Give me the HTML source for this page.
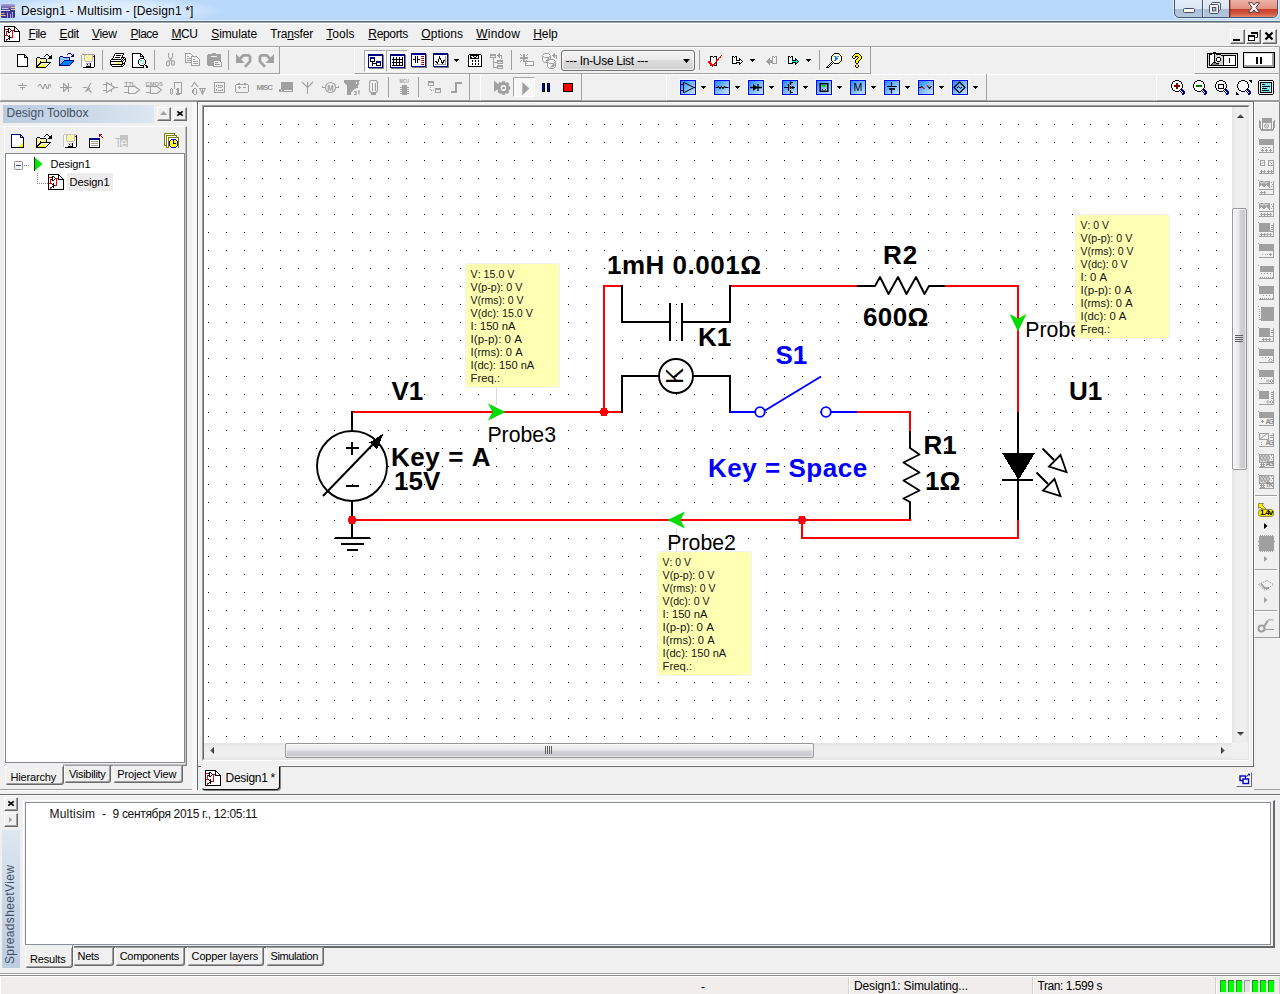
<!DOCTYPE html>
<html lang="en"><head><meta charset="utf-8">
<title>Design1 - Multisim - [Design1 *]</title>
<style>
html,body{margin:0;padding:0;}
body{width:1280px;height:994px;overflow:hidden;background:#f0f0f0;font-family:"Liberation Sans",sans-serif;font-size:12px;color:#000;}
#app{position:relative;width:1280px;height:994px;overflow:hidden;background:#f0f0f0;}
#app div,#app span.t,#app svg.i{position:absolute;box-sizing:border-box;}
span.t{white-space:pre;display:block;}
svg.i{overflow:visible;display:block;}
u{text-decoration:underline;text-underline-offset:1px;}

</style></head>
<body>
<div id="app">
<!-- p_chrome -->
<div class="titlebar" style="left:0px;top:0px;width:1280px;height:20px;background:#b9d9fb;"></div>
<div style="left:0px;top:0px;width:260px;height:20px;background:radial-gradient(ellipse 125px 15px at 100px 11px,rgba(255,255,255,.62) 0,rgba(255,255,255,.5) 55%,rgba(255,255,255,0) 100%);"></div>
<div style="left:0px;top:20px;width:1280px;height:1px;background:#dff0fd;"></div>
<div style="left:0px;top:21px;width:1280px;height:1px;background:#5c6b7c;"></div>
<div style="left:0px;top:22px;width:1280px;height:1px;background:#a3a5a8;"></div>
<div style="left:0px;top:23px;width:1280px;height:1px;background:#ffffff;"></div>
<svg class="i" style="left:1px;top:4px" width="14" height="14" viewBox="0 0 14 14" ><defs><linearGradient id="appg" x1="0" y1="0" x2="0" y2="1"><stop offset="0" stop-color="#a9a3d4"/><stop offset=".22" stop-color="#7a73b6"/><stop offset=".45" stop-color="#3a338c"/><stop offset="1" stop-color="#3b3590"/></linearGradient></defs><rect x="0" y="0" width="14" height="14" rx="1.500" fill="url(#appg)"/><path d="M1 4.500H7.500" stroke="#c9c5e6" stroke-width="1"/><path d="M0 6.500H8.500" stroke="#dad6f2" stroke-width="1"/><path d="M10 3.500H14M10 5.500H14" stroke="#efcf82" stroke-width="1"/><path d="M0 9.500H3.500" stroke="#d6b670" stroke-width="1"/><path d="M0 11.500H4.500" stroke="#f0c862" stroke-width="1"/><path d="M6.500 8.500V14M9.500 9.500V14M11.500 8.500V14" stroke="#a9a2d6" stroke-width="1"/><rect x="11" y="8" width="1" height="1" fill="#e8e4fa"/><rect x="8" y="6" width="1" height="1" fill="#f2f0ff"/></svg>
<span class="t" style="left:21px;top:5px;font-size:12px;line-height:12px;letter-spacing:0.139px;">Design1 - Multisim - [Design1 *]</span>
<div class="winctl" style="left:1174px;top:-3px;width:104px;height:21px;border:1px solid #46556e;border-radius:0 0 5px 5px;background:linear-gradient(180deg,#e4edf8 0,#dbe6f3 10.5px,#aabfd9 11.5px,#b6c8df 100%);box-shadow:0 0 0 1px rgba(255,255,255,.55);overflow:hidden;"><div style="left:27px;top:0px;width:1px;height:20px;background:#46556e;"></div><div style="left:28px;top:0px;width:1px;height:20px;background:rgba(255,255,255,.5);"></div><div style="left:54px;top:0px;width:49px;height:20px;background:linear-gradient(180deg,#f0b9ad 0,#e39383 10.5px,#c8402c 11.5px,#d25a42 16px,#e6a088 100%);border-left:1px solid #6e2c22;box-shadow:inset 0 0 0 1px rgba(120,30,20,.35);"></div></div>
<svg class="i" style="left:1183px;top:8px" width="12" height="5" viewBox="0 0 12 5" ><rect x="0.500" y="0.500" width="11" height="4" rx="1" fill="#f6f6f6" stroke="#4a5064"/></svg>
<svg class="i" style="left:1209px;top:2px" width="13" height="12" viewBox="0 0 13 12" ><rect x="2.500" y="0.500" width="9" height="8" rx="1.200" fill="#f2f4f8" stroke="#4a5064" stroke-width="1"/><rect x="0.500" y="2.500" width="9" height="9" rx="1.200" fill="#f2f4f8" stroke="#4a5064" stroke-width="1"/><rect x="3.500" y="5.500" width="3.300" height="3.300" fill="#b8c8de" stroke="#4a5064" stroke-width="1"/></svg>
<svg class="i" style="left:1248px;top:2px" width="12" height="11" viewBox="0 0 12 11" ><path d="M0.500 0.700L4.300 0.700L6 3L7.700 0.700L11.500 0.700L8 5.500L11.500 10.300L7.700 10.300L6 8L4.300 10.300L0.500 10.300L4 5.500Z" fill="#fbfbfb" stroke="#5c3a44" stroke-width="1"/></svg>
<div class="menubar" style="left:0px;top:24px;width:1280px;height:22px;background:#f0f0f0;border-left:1px solid #fff;"></div>
<div style="left:0px;top:46px;width:1280px;height:1px;background:#a0a0a0;"></div>
<div style="left:0px;top:47px;width:1280px;height:1px;background:#fff;"></div>
<svg class="i" style="left:4px;top:26px" width="16" height="16" viewBox="0 0 16 16" shape-rendering="crispEdges"><path d="M0 0H11L16 5V16H0Z" fill="#fff"/><path fill="#000" d="M0 0h11v1h-11zM0 1h1v1h-1zM10 1h2v1h-2zM0 2h1v1h-1zM4 2h2v1h-2zM10 2h1v1h-1zM12 2h1v1h-1zM0 3h1v1h-1zM3 3h2v1h-2zM6 3h1v1h-1zM10 3h1v1h-1zM13 3h1v1h-1zM0 4h1v1h-1zM4 4h1v1h-1zM7 4h1v1h-1zM10 4h1v1h-1zM14 4h1v1h-1zM0 5h1v1h-1zM3 5h2v1h-2zM6 5h1v1h-1zM10 5h6v1h-6zM0 6h1v1h-1zM4 6h2v1h-2zM15 6h1v1h-1zM0 7h1v1h-1zM15 7h1v1h-1zM0 8h1v1h-1zM15 8h1v1h-1zM0 9h1v1h-1zM3 9h1v1h-1zM5 9h1v1h-1zM15 9h1v1h-1zM0 10h1v1h-1zM4 10h2v1h-2zM15 10h1v1h-1zM0 11h1v1h-1zM5 11h2v1h-2zM15 11h1v1h-1zM0 12h1v1h-1zM4 12h2v1h-2zM15 12h1v1h-1zM0 13h1v1h-1zM3 13h1v1h-1zM5 13h1v1h-1zM15 13h1v1h-1zM0 14h1v1h-1zM15 14h1v1h-1zM0 15h16v1h-16z"/><path fill="#ff0000" d="M1 3h2v1h-2zM8 4h2v1h-2zM2 5h1v1h-1zM8 5h1v1h-1zM2 6h1v1h-1zM8 6h1v1h-1zM2 7h1v1h-1zM8 7h1v1h-1zM2 8h1v1h-1zM8 8h1v1h-1zM1 9h2v1h-2zM8 9h1v1h-1zM8 10h1v1h-1zM7 11h2v1h-2zM2 13h1v1h-1zM2 14h1v1h-1z"/></svg>
<span class="t" style="left:28.5px;top:28px;font-size:12px;line-height:12px;letter-spacing:-0.465px;"><u>F</u>ile</span>
<span class="t" style="left:59.5px;top:28px;font-size:12px;line-height:12px;letter-spacing:-0.351px;"><u>E</u>dit</span>
<span class="t" style="left:92px;top:28px;font-size:12px;line-height:12px;letter-spacing:-0.328px;"><u>V</u>iew</span>
<span class="t" style="left:130.5px;top:28px;font-size:12px;line-height:12px;letter-spacing:-0.506px;"><u>P</u>lace</span>
<span class="t" style="left:171.5px;top:28px;font-size:12px;line-height:12px;letter-spacing:-0.448px;"><u>M</u>CU</span>
<span class="t" style="left:211.3px;top:28px;font-size:12px;line-height:12px;letter-spacing:-0.125px;"><u>S</u>imulate</span>
<span class="t" style="left:270.3px;top:28px;font-size:12px;line-height:12px;letter-spacing:-0.196px;">Tra<u>n</u>sfer</span>
<span class="t" style="left:326.3px;top:28px;font-size:12px;line-height:12px;letter-spacing:0.037px;"><u>T</u>ools</span>
<span class="t" style="left:368.3px;top:28px;font-size:12px;line-height:12px;letter-spacing:-0.333px;"><u>R</u>eports</span>
<span class="t" style="left:421.3px;top:28px;font-size:12px;line-height:12px;letter-spacing:0.046px;"><u>O</u>ptions</span>
<span class="t" style="left:476.3px;top:28px;font-size:12px;line-height:12px;letter-spacing:0.169px;"><u>W</u>indow</span>
<span class="t" style="left:533.3px;top:28px;font-size:12px;line-height:12px;letter-spacing:-0.122px;"><u>H</u>elp</span>
<div class="mdibtn" style="left:1230px;top:29px;width:15px;height:15px;background:#f0f0f0;border:1px solid;border-color:#fff #696969 #696969 #fff;box-shadow:inset -1px -1px 0 #a0a0a0;"></div>
<div class="mdibtn" style="left:1246px;top:29px;width:15px;height:15px;background:#f0f0f0;border:1px solid;border-color:#fff #696969 #696969 #fff;box-shadow:inset -1px -1px 0 #a0a0a0;"></div>
<div class="mdibtn" style="left:1262px;top:29px;width:15px;height:15px;background:#f0f0f0;border:1px solid;border-color:#fff #696969 #696969 #fff;box-shadow:inset -1px -1px 0 #a0a0a0;"></div>
<svg class="i" style="left:1230px;top:29px" width="15" height="15" viewBox="0 0 15 15" ><rect x="3" y="10" width="7" height="2" fill="#000"/></svg>
<svg class="i" style="left:1246px;top:29px" width="15" height="15" viewBox="0 0 15 15" ><path d="M5.5 3.5h6v5h-2" fill="none" stroke="#000"/><rect x="5" y="3" width="7" height="2" fill="#000"/><rect x="2.500" y="6.500" width="6" height="5" fill="#fff" stroke="#000"/><rect x="2" y="6" width="7" height="2" fill="#000"/></svg>
<svg class="i" style="left:1262px;top:29px" width="15" height="15" viewBox="0 0 15 15" ><path d="M3.5 3.5L10.500 10.500M10.500 3.5L3.5 10.500" stroke="#000" stroke-width="2.200"/></svg>
<!-- p_toolbars -->
<div class="tbgroup" style="left:0px;top:47px;width:280px;height:27px;border-left:1px solid #fff;border-bottom:1px solid #a0a0a0;border-right:1px solid #a0a0a0;"></div>
<svg class="i" style="left:17px;top:54px" width="11" height="13" viewBox="0 0 11 13" shape-rendering="crispEdges"><path fill="#000000" d="M0 0h8v1h-8zM0 1h1v1h-1zM7 1h2v1h-2zM0 2h1v1h-1zM7 2h1v1h-1zM9 2h1v1h-1zM0 3h1v1h-1zM7 3h4v1h-4zM0 4h1v1h-1zM10 4h1v1h-1zM0 5h1v1h-1zM10 5h1v1h-1zM0 6h1v1h-1zM10 6h1v1h-1zM0 7h1v1h-1zM10 7h1v1h-1zM0 8h1v1h-1zM10 8h1v1h-1zM0 9h1v1h-1zM10 9h1v1h-1zM0 10h1v1h-1zM10 10h1v1h-1zM0 11h1v1h-1zM10 11h1v1h-1zM0 12h11v1h-11z"/><path fill="#ffffff" d="M1 1h6v1h-6zM1 2h6v1h-6zM8 2h1v1h-1zM1 3h6v1h-6zM1 4h9v1h-9zM1 5h9v1h-9zM1 6h9v1h-9zM1 7h9v1h-9zM1 8h9v1h-9zM1 9h9v1h-9zM1 10h9v1h-9zM1 11h9v1h-9z"/></svg>
<svg class="i" style="left:36px;top:54px" width="16" height="14" viewBox="0 0 16 14" shape-rendering="crispEdges"><path fill="#000000" d="M10 0h2v1h-2zM9 1h1v1h-1zM12 1h1v1h-1zM15 1h1v1h-1zM8 2h1v1h-1zM13 2h3v1h-3zM1 3h3v1h-3zM13 3h3v1h-3zM0 4h1v1h-1zM4 4h6v1h-6zM12 4h4v1h-4zM0 5h1v1h-1zM10 5h1v1h-1zM0 6h1v1h-1zM10 6h1v1h-1zM0 7h1v1h-1zM10 7h1v1h-1zM0 8h1v1h-1zM5 8h10v1h-10zM0 9h1v1h-1zM4 9h1v1h-1zM13 9h1v1h-1zM0 10h1v1h-1zM3 10h1v1h-1zM12 10h1v1h-1zM0 11h1v1h-1zM2 11h1v1h-1zM11 11h1v1h-1zM0 12h2v1h-2zM10 12h1v1h-1zM0 13h10v1h-10z"/><path fill="#ffffff" d="M1 4h3v1h-3zM2 5h1v1h-1zM4 5h6v1h-6zM1 6h1v1h-1zM3 6h1v1h-1zM5 6h1v1h-1zM7 6h1v1h-1zM9 6h1v1h-1zM2 7h1v1h-1zM6 7h1v1h-1zM8 7h1v1h-1zM1 8h1v1h-1zM3 8h1v1h-1zM2 9h1v1h-1zM6 9h7v1h-7zM1 10h1v1h-1zM5 10h1v1h-1zM7 10h1v1h-1zM9 10h1v1h-1zM11 10h1v1h-1zM4 11h1v1h-1zM6 11h1v1h-1zM8 11h1v1h-1zM10 11h1v1h-1z"/><path fill="#ffff00" d="M1 5h1v1h-1zM3 5h1v1h-1zM2 6h1v1h-1zM4 6h1v1h-1zM6 6h1v1h-1zM8 6h1v1h-1zM1 7h1v1h-1zM3 7h1v1h-1zM5 7h1v1h-1zM7 7h1v1h-1zM9 7h1v1h-1zM2 8h1v1h-1zM1 9h1v1h-1zM5 9h1v1h-1zM4 10h1v1h-1zM6 10h1v1h-1zM8 10h1v1h-1zM10 10h1v1h-1zM3 11h1v1h-1zM5 11h1v1h-1zM7 11h1v1h-1zM9 11h1v1h-1zM2 12h8v1h-8z"/><path fill="#000080" d="M4 7h1v1h-1zM4 8h1v1h-1zM3 9h1v1h-1zM2 10h1v1h-1zM1 11h1v1h-1z"/></svg>
<svg class="i" style="left:59px;top:53px" width="15" height="13" viewBox="0 0 15 13" shape-rendering="crispEdges"><path fill="#000080" d="M9 0h3v1h-3zM8 1h1v1h-1zM12 1h1v1h-1zM14 1h1v1h-1zM13 2h2v1h-2zM1 3h3v1h-3zM12 3h3v1h-3zM0 4h1v1h-1zM4 4h7v1h-7zM0 5h1v1h-1zM10 5h1v1h-1zM0 6h1v1h-1zM10 6h1v1h-1zM0 7h1v1h-1zM5 7h10v1h-10zM0 8h1v1h-1zM4 8h1v1h-1zM14 8h1v1h-1zM0 9h1v1h-1zM3 9h1v1h-1zM13 9h1v1h-1zM0 10h1v1h-1zM2 10h1v1h-1zM12 10h1v1h-1zM0 11h2v1h-2zM11 11h1v1h-1zM0 12h11v1h-11z"/><path fill="#8cc8ff" d="M1 4h3v1h-3zM1 5h9v1h-9zM1 6h9v1h-9zM1 7h4v1h-4zM1 8h3v1h-3zM1 9h2v1h-2zM1 10h1v1h-1z"/><path fill="#0080ff" d="M5 8h9v1h-9zM4 9h9v1h-9zM3 10h9v1h-9zM2 11h9v1h-9z"/></svg>
<svg class="i" style="left:81px;top:54px" width="14" height="14" viewBox="0 0 14 14" shape-rendering="crispEdges"><path fill="#a0a0a0" d="M1 0h12v1h-12zM0 1h1v1h-1zM0 2h1v1h-1zM0 3h1v1h-1zM0 4h1v1h-1zM0 5h1v1h-1zM0 6h1v1h-1zM0 7h1v1h-1zM0 8h1v1h-1zM0 9h1v1h-1zM5 9h4v1h-4zM0 10h1v1h-1zM0 11h1v1h-1zM0 12h1v1h-1z"/><path fill="#fdfdfd" d="M1 1h2v1h-2zM12 1h1v1h-1zM1 2h2v1h-2zM1 3h2v1h-2zM12 3h1v1h-1zM1 4h2v1h-2zM12 4h1v1h-1zM1 5h2v1h-2zM12 5h1v1h-1zM1 6h2v1h-2zM12 6h1v1h-1zM1 7h3v1h-3zM11 7h2v1h-2zM1 8h12v1h-12zM1 9h4v1h-4zM10 9h3v1h-3zM1 10h4v1h-4zM10 10h3v1h-3zM1 11h4v1h-4zM10 11h3v1h-3zM1 12h4v1h-4zM10 12h3v1h-3z"/><path fill="#b4b4c8" d="M3 1h1v1h-1zM11 1h1v1h-1zM3 2h1v1h-1zM11 2h1v1h-1zM3 3h1v1h-1zM11 3h1v1h-1zM3 4h1v1h-1zM11 4h1v1h-1zM3 5h1v1h-1zM11 5h1v1h-1zM3 6h1v1h-1zM11 6h1v1h-1zM4 7h7v1h-7z"/><path fill="#ffff00" d="M4 1h1v1h-1zM7 1h1v1h-1zM10 1h1v1h-1zM5 2h1v1h-1zM8 2h1v1h-1zM6 3h1v1h-1zM9 3h1v1h-1zM4 4h1v1h-1zM7 4h1v1h-1zM10 4h1v1h-1zM5 5h1v1h-1zM8 5h1v1h-1zM4 6h1v1h-1zM6 6h1v1h-1zM9 6h1v1h-1z"/><path fill="#ffffff" d="M5 1h2v1h-2zM8 1h2v1h-2zM4 2h1v1h-1zM6 2h2v1h-2zM9 2h2v1h-2zM4 3h2v1h-2zM7 3h2v1h-2zM10 3h1v1h-1zM5 4h2v1h-2zM8 4h2v1h-2zM4 5h1v1h-1zM6 5h2v1h-2zM9 5h2v1h-2zM5 6h1v1h-1zM7 6h2v1h-2zM10 6h1v1h-1zM7 10h1v1h-1z"/><path fill="#000000" d="M13 1h1v1h-1zM13 2h1v1h-1zM13 3h1v1h-1zM13 4h1v1h-1zM13 5h1v1h-1zM13 6h1v1h-1zM13 7h1v1h-1zM13 8h1v1h-1zM9 9h1v1h-1zM13 9h1v1h-1zM6 10h1v1h-1zM9 10h1v1h-1zM13 10h1v1h-1zM9 11h1v1h-1zM13 11h1v1h-1zM5 12h5v1h-5zM13 12h1v1h-1zM2 13h11v1h-11z"/><path fill="#ff0000" d="M12 2h1v1h-1z"/><path fill="#d4d4d4" d="M5 10h1v1h-1zM8 10h1v1h-1zM5 11h4v1h-4z"/></svg>
<svg class="i" style="left:110px;top:53px" width="16" height="14" viewBox="0 0 16 14" shape-rendering="crispEdges"><path fill="#000000" d="M5 0h9v1h-9zM4 1h1v1h-1zM13 1h1v1h-1zM4 2h1v1h-1zM6 2h5v1h-5zM12 2h1v1h-1zM3 3h1v1h-1zM12 3h1v1h-1zM3 4h1v1h-1zM5 4h5v1h-5zM11 4h4v1h-4zM2 5h1v1h-1zM11 5h1v1h-1zM13 5h1v1h-1zM15 5h1v1h-1zM1 6h10v1h-10zM12 6h1v1h-1zM14 6h2v1h-2zM0 7h1v1h-1zM11 7h1v1h-1zM13 7h1v1h-1zM15 7h1v1h-1zM0 8h13v1h-13zM15 8h1v1h-1zM0 9h1v1h-1zM12 9h1v1h-1zM14 9h1v1h-1zM0 10h1v1h-1zM12 10h3v1h-3zM0 11h13v1h-13zM14 11h1v1h-1zM1 12h1v1h-1zM11 12h1v1h-1zM13 12h1v1h-1zM2 13h11v1h-11z"/><path fill="#ffffff" d="M5 1h8v1h-8zM5 2h1v1h-1zM11 2h1v1h-1zM4 3h8v1h-8zM4 4h1v1h-1zM10 4h1v1h-1zM3 5h8v1h-8zM12 5h1v1h-1zM14 5h1v1h-1zM11 6h1v1h-1zM13 6h1v1h-1zM1 7h10v1h-10zM12 7h1v1h-1zM14 7h1v1h-1zM13 8h2v1h-2zM1 9h6v1h-6zM10 9h2v1h-2zM13 9h1v1h-1zM1 10h6v1h-6zM10 10h2v1h-2zM13 11h1v1h-1zM2 12h9v1h-9zM12 12h1v1h-1z"/><path fill="#ffff00" d="M7 9h3v1h-3zM7 10h3v1h-3z"/></svg>
<svg class="i" style="left:132px;top:53px" width="16" height="15" viewBox="0 0 16 15" shape-rendering="crispEdges"><path fill="#000000" d="M0 0h9v1h-9zM0 1h1v1h-1zM8 1h2v1h-2zM0 2h1v1h-1zM8 2h1v1h-1zM10 2h1v1h-1zM0 3h1v1h-1zM8 3h4v1h-4zM0 4h1v1h-1zM11 4h1v1h-1zM0 5h1v1h-1zM8 5h4v1h-4zM0 6h1v1h-1zM7 6h1v1h-1zM12 6h1v1h-1zM0 7h1v1h-1zM6 7h1v1h-1zM13 7h1v1h-1zM0 8h1v1h-1zM6 8h1v1h-1zM13 8h1v1h-1zM0 9h1v1h-1zM6 9h1v1h-1zM13 9h1v1h-1zM0 10h1v1h-1zM6 10h1v1h-1zM13 10h1v1h-1zM0 11h1v1h-1zM7 11h1v1h-1zM12 11h1v1h-1zM0 12h1v1h-1zM8 12h4v1h-4zM13 12h2v1h-2zM0 13h1v1h-1zM11 13h1v1h-1zM14 13h2v1h-2zM0 14h12v1h-12zM14 14h2v1h-2z"/><path fill="#ffffff" d="M1 1h7v1h-7zM1 2h7v1h-7zM9 2h1v1h-1zM1 3h7v1h-7zM1 4h10v1h-10zM1 5h7v1h-7zM1 6h6v1h-6zM8 6h4v1h-4zM1 7h5v1h-5zM7 7h1v1h-1zM10 7h1v1h-1zM12 7h1v1h-1zM1 8h5v1h-5zM7 8h1v1h-1zM9 8h2v1h-2zM12 8h1v1h-1zM1 9h5v1h-5zM7 9h4v1h-4zM12 9h1v1h-1zM1 10h5v1h-5zM7 10h3v1h-3zM12 10h1v1h-1zM1 11h6v1h-6zM8 11h4v1h-4zM1 12h7v1h-7zM12 12h1v1h-1zM1 13h10v1h-10z"/><path fill="#00f0f0" d="M8 7h2v1h-2zM8 8h1v1h-1zM10 10h1v1h-1z"/><path fill="#d4d4d4" d="M11 7h1v1h-1zM11 8h1v1h-1zM11 9h1v1h-1zM11 10h1v1h-1z"/></svg>
<svg class="i" style="left:160px;top:50px" width="120" height="22" viewBox="160 50 120 22"><g shape-rendering="crispEdges"><path d="M185.500 53.500H190.500L192.500 55.500V62.500H185.500Z" fill="#f6f6f6" stroke="#a0a0a0"/><path d="M191.500 56.500H196.500L199.500 59.500V65.500H191.500Z" fill="#f6f6f6" stroke="#a0a0a0"/><path d="M208 54H220L221 55V65L220 66H208L207 65V55Z" fill="#a0a0a0"/><rect x="212" y="53" width="4" height="1" fill="#a0a0a0"/><rect x="211" y="56" width="6" height="1" fill="#f0f0f0"/><path d="M213.500 60.500H219.500L221.500 62.500V66.500H213.500Z" fill="#f6f6f6" stroke="#a0a0a0"/><path d="M168.5 53V57M172.5 53V57M187 56.5H189M187 58.5H191M187 60.5H191M193 59.5H195M193 61.5H198M193 63.5H198M215 62.5H218M215 64.5H220" fill="none" stroke="#a0a0a0" stroke-width="1"/></g><path d="M168.500 57L170.500 59.500L172.500 57M170.500 59.500L169 61.500M170.500 59.500L172 61.500M166.500 63.500a1.500 2.500 0 1 0 3 0a1.500 2.500 0 1 0 -3 0M171.500 63a1.500 2.200 0 1 0 3 0a1.500 2.200 0 1 0 -3 0" fill="none" stroke="#a0a0a0" stroke-width="1.100"/><path d="M236 54V63H244.7Z" fill="#a0a0a0"/><path d="M240 58.700L243.3 55.300H248.6L250.1 56.800V61.300L245 66.800" fill="none" stroke="#a0a0a0" stroke-width="2.700" stroke-linejoin="miter"/><path d="M274 54V63H265.3Z" fill="#a0a0a0"/><path d="M270 58.700L266.7 55.300H261.4L259.9 56.800V61.300L265 66.800" fill="none" stroke="#a0a0a0" stroke-width="2.700" stroke-linejoin="miter"/></svg>
<div class="sep" style="left:102px;top:50px;width:1px;height:20px;background:#a0a0a0;"></div>
<div class="sep" style="left:154px;top:50px;width:1px;height:20px;background:#a0a0a0;"></div>
<div class="sep" style="left:228px;top:50px;width:1px;height:20px;background:#a0a0a0;"></div>
<div class="tbgroup" style="left:354px;top:47px;width:517px;height:27px;border-left:1px solid #fff;border-bottom:1px solid #a0a0a0;border-right:1px solid #a0a0a0;"></div>
<div class="tbchecked" style="left:364px;top:50px;width:22px;height:22px;background:#f8f8f8;border:1px solid;border-color:#a8a8a8 #fff #fff #a8a8a8;"></div>
<div class="tbchecked" style="left:386px;top:50px;width:22px;height:22px;background:#f8f8f8;border:1px solid;border-color:#a8a8a8 #fff #fff #a8a8a8;"></div>
<svg class="i" style="left:368px;top:54px" width="16" height="15" viewBox="0 0 16 15" shape-rendering="crispEdges"><path fill="#000080" d="M0 0h15v1h-15zM0 1h15v1h-15zM0 2h1v1h-1zM14 2h1v1h-1zM0 3h1v1h-1zM2 3h5v1h-5zM14 3h1v1h-1zM0 4h1v1h-1zM2 4h5v1h-5zM14 4h1v1h-1zM0 5h1v1h-1zM14 5h1v1h-1zM0 6h1v1h-1zM14 6h1v1h-1zM0 7h1v1h-1zM8 7h5v1h-5zM14 7h1v1h-1zM0 8h1v1h-1zM8 8h5v1h-5zM14 8h1v1h-1zM0 9h1v1h-1zM14 9h1v1h-1zM0 10h1v1h-1zM14 10h1v1h-1zM0 11h1v1h-1zM14 11h1v1h-1zM0 12h1v1h-1zM14 12h1v1h-1zM0 13h15v1h-15z"/><path fill="#808080" d="M15 1h1v1h-1zM15 2h1v1h-1zM15 3h1v1h-1zM15 4h1v1h-1zM15 5h1v1h-1zM15 6h1v1h-1zM15 7h1v1h-1zM15 8h1v1h-1zM15 9h1v1h-1zM15 10h1v1h-1zM15 11h1v1h-1zM15 12h1v1h-1zM15 13h1v1h-1zM1 14h15v1h-15z"/><path fill="#ffffff" d="M1 2h13v1h-13zM1 3h1v1h-1zM7 3h7v1h-7zM1 4h1v1h-1zM7 4h7v1h-7zM1 5h1v1h-1zM3 5h3v1h-3zM7 5h7v1h-7zM1 6h1v1h-1zM3 6h3v1h-3zM7 6h7v1h-7zM1 7h1v1h-1zM7 7h1v1h-1zM13 7h1v1h-1zM1 8h3v1h-3zM5 8h3v1h-3zM13 8h1v1h-1zM1 9h3v1h-3zM9 9h3v1h-3zM13 9h1v1h-1zM1 10h3v1h-3zM5 10h3v1h-3zM9 10h3v1h-3zM13 10h1v1h-1zM1 11h3v1h-3zM5 11h3v1h-3zM13 11h1v1h-1zM1 12h13v1h-13z"/><path fill="#000000" d="M2 5h1v1h-1zM6 5h1v1h-1zM2 6h1v1h-1zM6 6h1v1h-1zM2 7h5v1h-5zM4 8h1v1h-1zM4 9h5v1h-5zM12 9h1v1h-1zM4 10h1v1h-1zM8 10h1v1h-1zM12 10h1v1h-1zM4 11h1v1h-1zM8 11h5v1h-5z"/></svg>
<svg class="i" style="left:390px;top:54px" width="16" height="15" viewBox="0 0 16 15" shape-rendering="crispEdges"><path fill="#000080" d="M0 0h15v1h-15zM0 1h15v1h-15zM0 2h1v1h-1zM14 2h1v1h-1zM0 3h1v1h-1zM14 3h1v1h-1zM0 4h1v1h-1zM14 4h1v1h-1zM0 5h1v1h-1zM14 5h1v1h-1zM0 6h1v1h-1zM14 6h1v1h-1zM0 7h1v1h-1zM14 7h1v1h-1zM0 8h1v1h-1zM14 8h1v1h-1zM0 9h1v1h-1zM14 9h1v1h-1zM0 10h1v1h-1zM14 10h1v1h-1zM0 11h1v1h-1zM14 11h1v1h-1zM0 12h1v1h-1zM14 12h1v1h-1zM0 13h15v1h-15z"/><path fill="#808080" d="M15 1h1v1h-1zM15 2h1v1h-1zM15 3h1v1h-1zM15 4h1v1h-1zM15 5h1v1h-1zM15 6h1v1h-1zM15 7h1v1h-1zM15 8h1v1h-1zM15 9h1v1h-1zM15 10h1v1h-1zM15 11h1v1h-1zM15 12h1v1h-1zM15 13h1v1h-1zM1 14h15v1h-15z"/><path fill="#ffffff" d="M1 2h13v1h-13zM1 3h2v1h-2zM4 3h2v1h-2zM7 3h2v1h-2zM10 3h2v1h-2zM13 3h1v1h-1zM1 4h2v1h-2zM4 4h2v1h-2zM7 4h2v1h-2zM10 4h2v1h-2zM13 4h1v1h-1zM1 5h1v1h-1zM13 5h1v1h-1zM1 6h2v1h-2zM4 6h2v1h-2zM7 6h2v1h-2zM10 6h2v1h-2zM13 6h1v1h-1zM1 7h2v1h-2zM4 7h2v1h-2zM7 7h2v1h-2zM10 7h2v1h-2zM13 7h1v1h-1zM1 8h1v1h-1zM13 8h1v1h-1zM1 9h2v1h-2zM4 9h2v1h-2zM7 9h2v1h-2zM10 9h2v1h-2zM13 9h1v1h-1zM1 10h2v1h-2zM4 10h2v1h-2zM7 10h2v1h-2zM10 10h2v1h-2zM13 10h1v1h-1zM1 11h1v1h-1zM13 11h1v1h-1zM1 12h13v1h-13z"/><path fill="#000000" d="M3 3h1v1h-1zM6 3h1v1h-1zM9 3h1v1h-1zM12 3h1v1h-1zM3 4h1v1h-1zM6 4h1v1h-1zM9 4h1v1h-1zM12 4h1v1h-1zM2 5h11v1h-11zM3 6h1v1h-1zM6 6h1v1h-1zM9 6h1v1h-1zM12 6h1v1h-1zM3 7h1v1h-1zM6 7h1v1h-1zM9 7h1v1h-1zM12 7h1v1h-1zM2 8h11v1h-11zM3 9h1v1h-1zM6 9h1v1h-1zM9 9h1v1h-1zM12 9h1v1h-1zM3 10h1v1h-1zM6 10h1v1h-1zM9 10h1v1h-1zM12 10h1v1h-1zM2 11h11v1h-11z"/></svg>
<svg class="i" style="left:411px;top:53px" width="16" height="15" viewBox="0 0 16 15" shape-rendering="crispEdges"><path fill="#000080" d="M0 0h15v1h-15zM0 1h15v1h-15zM0 2h1v1h-1zM14 2h1v1h-1zM0 3h1v1h-1zM14 3h1v1h-1zM0 4h1v1h-1zM14 4h1v1h-1zM0 5h1v1h-1zM14 5h1v1h-1zM0 6h1v1h-1zM14 6h1v1h-1zM0 7h1v1h-1zM14 7h1v1h-1zM0 8h1v1h-1zM14 8h1v1h-1zM0 9h1v1h-1zM14 9h1v1h-1zM0 10h1v1h-1zM14 10h1v1h-1zM0 11h1v1h-1zM14 11h1v1h-1zM0 12h1v1h-1zM14 12h1v1h-1zM0 13h15v1h-15z"/><path fill="#808080" d="M15 1h1v1h-1zM15 2h1v1h-1zM15 3h1v1h-1zM15 4h1v1h-1zM15 5h1v1h-1zM15 6h1v1h-1zM15 7h1v1h-1zM15 8h1v1h-1zM15 9h1v1h-1zM15 10h1v1h-1zM15 11h1v1h-1zM15 12h1v1h-1zM15 13h1v1h-1zM1 14h15v1h-15z"/><path fill="#ffffff" d="M1 2h13v1h-13zM1 3h3v1h-3zM5 3h1v1h-1zM7 3h3v1h-3zM13 3h1v1h-1zM1 4h3v1h-3zM5 4h1v1h-1zM7 4h7v1h-7zM1 5h3v1h-3zM5 5h1v1h-1zM7 5h3v1h-3zM13 5h1v1h-1zM1 6h1v1h-1zM5 6h1v1h-1zM9 6h5v1h-5zM1 7h3v1h-3zM5 7h1v1h-1zM7 7h3v1h-3zM13 7h1v1h-1zM1 8h3v1h-3zM5 8h1v1h-1zM7 8h7v1h-7zM1 9h3v1h-3zM5 9h1v1h-1zM7 9h3v1h-3zM13 9h1v1h-1zM1 10h13v1h-13zM1 11h9v1h-9zM13 11h1v1h-1zM1 12h13v1h-13z"/><path fill="#000000" d="M4 3h1v1h-1zM6 3h1v1h-1zM12 3h1v1h-1zM4 4h1v1h-1zM6 4h1v1h-1zM4 5h1v1h-1zM6 5h1v1h-1zM12 5h1v1h-1zM2 6h3v1h-3zM6 6h3v1h-3zM4 7h1v1h-1zM6 7h1v1h-1zM12 7h1v1h-1zM4 8h1v1h-1zM6 8h1v1h-1zM4 9h1v1h-1zM6 9h1v1h-1zM12 9h1v1h-1zM12 11h1v1h-1z"/><path fill="#ff0000" d="M10 3h2v1h-2zM10 5h2v1h-2zM10 7h2v1h-2zM10 9h2v1h-2zM10 11h2v1h-2z"/></svg>
<svg class="i" style="left:433px;top:53px" width="16" height="15" viewBox="0 0 16 15" shape-rendering="crispEdges"><path fill="#000080" d="M0 0h15v1h-15zM0 1h15v1h-15zM0 2h1v1h-1zM14 2h1v1h-1zM0 3h1v1h-1zM14 3h1v1h-1zM0 4h1v1h-1zM14 4h1v1h-1zM0 5h1v1h-1zM14 5h1v1h-1zM0 6h1v1h-1zM14 6h1v1h-1zM0 7h1v1h-1zM14 7h1v1h-1zM0 8h1v1h-1zM14 8h1v1h-1zM0 9h1v1h-1zM14 9h1v1h-1zM0 10h1v1h-1zM14 10h1v1h-1zM0 11h1v1h-1zM14 11h1v1h-1zM0 12h1v1h-1zM14 12h1v1h-1zM0 13h15v1h-15z"/><path fill="#808080" d="M15 1h1v1h-1zM15 2h1v1h-1zM15 3h1v1h-1zM15 4h1v1h-1zM15 5h1v1h-1zM15 6h1v1h-1zM15 7h1v1h-1zM15 8h1v1h-1zM15 9h1v1h-1zM15 10h1v1h-1zM15 11h1v1h-1zM15 12h1v1h-1zM15 13h1v1h-1zM1 14h15v1h-15z"/><path fill="#ffffff" d="M1 2h13v1h-13zM1 3h5v1h-5zM7 3h5v1h-5zM13 3h1v1h-1zM1 4h5v1h-5zM7 4h5v1h-5zM13 4h1v1h-1zM1 5h5v1h-5zM8 5h4v1h-4zM13 5h1v1h-1zM1 6h4v1h-4zM6 6h1v1h-1zM8 6h4v1h-4zM13 6h1v1h-1zM1 7h4v1h-4zM6 7h2v1h-2zM9 7h1v1h-1zM13 7h1v1h-1zM1 8h1v1h-1zM4 8h1v1h-1zM6 8h2v1h-2zM9 8h1v1h-1zM11 8h1v1h-1zM13 8h1v1h-1zM1 9h2v1h-2zM5 9h3v1h-3zM11 9h1v1h-1zM13 9h1v1h-1zM1 10h3v1h-3zM5 10h4v1h-4zM10 10h2v1h-2zM13 10h1v1h-1zM1 11h1v1h-1zM13 11h1v1h-1zM1 12h13v1h-13z"/><path fill="#000000" d="M6 3h1v1h-1zM6 4h1v1h-1zM6 5h2v1h-2zM5 6h1v1h-1zM7 6h1v1h-1zM5 7h1v1h-1zM8 7h1v1h-1zM10 7h2v1h-2zM2 8h2v1h-2zM5 8h1v1h-1zM8 8h1v1h-1zM10 8h1v1h-1zM3 9h2v1h-2zM8 9h3v1h-3zM4 10h1v1h-1zM9 10h1v1h-1z"/><path fill="#a0a0a0" d="M12 3h1v1h-1zM12 4h1v1h-1zM12 5h1v1h-1zM12 6h1v1h-1zM12 7h1v1h-1zM12 8h1v1h-1zM12 9h1v1h-1zM12 10h1v1h-1zM2 11h11v1h-11z"/></svg>
<svg class="i" style="left:468px;top:54px" width="14" height="13" viewBox="0 0 14 13" shape-rendering="crispEdges"><path fill="#000000" d="M1 0h12v1h-12zM0 1h1v1h-1zM2 1h9v1h-9zM13 1h1v1h-1zM0 2h1v1h-1zM2 2h1v1h-1zM5 2h1v1h-1zM8 2h1v1h-1zM10 2h1v1h-1zM13 2h1v1h-1zM0 3h1v1h-1zM2 3h2v1h-2zM6 3h2v1h-2zM10 3h1v1h-1zM13 3h1v1h-1zM0 4h1v1h-1zM2 4h9v1h-9zM13 4h1v1h-1zM0 5h1v1h-1zM13 5h1v1h-1zM0 6h1v1h-1zM4 6h1v1h-1zM7 6h1v1h-1zM10 6h1v1h-1zM13 6h1v1h-1zM0 7h1v1h-1zM4 7h1v1h-1zM7 7h1v1h-1zM10 7h1v1h-1zM13 7h1v1h-1zM0 8h1v1h-1zM13 8h1v1h-1zM0 9h1v1h-1zM4 9h1v1h-1zM7 9h1v1h-1zM10 9h1v1h-1zM13 9h1v1h-1zM0 10h1v1h-1zM4 10h1v1h-1zM7 10h1v1h-1zM10 10h1v1h-1zM13 10h1v1h-1zM0 11h1v1h-1zM13 11h1v1h-1zM0 12h14v1h-14z"/><path fill="#ffffff" d="M1 1h1v1h-1zM11 1h2v1h-2zM1 2h1v1h-1zM3 2h2v1h-2zM6 2h2v1h-2zM9 2h1v1h-1zM11 2h2v1h-2zM1 3h1v1h-1zM4 3h2v1h-2zM8 3h2v1h-2zM11 3h2v1h-2zM1 4h1v1h-1zM11 4h2v1h-2zM1 5h12v1h-12zM1 6h3v1h-3zM5 6h2v1h-2zM8 6h2v1h-2zM11 6h2v1h-2zM1 7h3v1h-3zM5 7h2v1h-2zM8 7h2v1h-2zM11 7h2v1h-2zM1 8h12v1h-12zM1 9h3v1h-3zM5 9h2v1h-2zM8 9h2v1h-2zM11 9h2v1h-2zM1 10h3v1h-3zM5 10h2v1h-2zM8 10h2v1h-2zM11 10h2v1h-2zM1 11h12v1h-12z"/></svg>
<svg class="i" style="left:708px;top:55px" width="14" height="12" viewBox="0 0 14 12" shape-rendering="crispEdges"><path fill="#ff0000" d="M13 0h1v1h-1zM12 1h1v1h-1zM11 2h2v1h-2zM10 3h1v1h-1zM9 4h2v1h-2zM8 5h2v1h-2zM0 6h2v1h-2zM8 6h1v1h-1zM0 7h3v1h-3zM7 7h1v1h-1zM1 8h3v1h-3zM6 8h2v1h-2zM2 9h5v1h-5zM3 10h3v1h-3zM4 11h1v1h-1z"/><path fill="#000000" d="M2 1h3v1h-3zM6 1h3v1h-3zM2 2h1v1h-1zM5 2h1v1h-1zM8 2h1v1h-1zM2 3h1v1h-1zM8 3h1v1h-1zM2 4h1v1h-1zM8 4h1v1h-1zM2 5h1v1h-1zM2 6h1v1h-1zM8 7h1v1h-1zM8 8h1v1h-1zM8 9h1v1h-1zM2 10h1v1h-1zM6 10h3v1h-3z"/><path fill="#ffffff" d="M4 2h1v1h-1zM6 2h1v1h-1zM3 3h5v1h-5zM3 4h5v1h-5zM3 5h5v1h-5zM3 6h5v1h-5zM3 7h4v1h-4zM4 8h2v1h-2zM7 9h1v1h-1z"/></svg>
<svg class="i" style="left:732px;top:56px" width="12" height="9" viewBox="0 0 12 9" shape-rendering="crispEdges"><path fill="#000000" d="M0 0h2v1h-2zM3 0h2v1h-2zM0 1h1v1h-1zM2 1h1v1h-1zM4 1h1v1h-1zM0 2h1v1h-1zM4 2h1v1h-1zM7 2h1v1h-1zM0 3h1v1h-1zM4 3h1v1h-1zM7 3h2v1h-2zM0 4h1v1h-1zM4 4h4v1h-4zM9 4h1v1h-1zM0 5h1v1h-1zM10 5h1v1h-1zM0 6h1v1h-1zM4 6h4v1h-4zM9 6h1v1h-1zM0 7h5v1h-5zM7 7h2v1h-2zM7 8h1v1h-1z"/><path fill="#ffffff" d="M1 1h1v1h-1zM3 1h1v1h-1zM1 2h3v1h-3zM1 3h3v1h-3zM1 4h3v1h-3zM8 4h1v1h-1zM1 5h9v1h-9zM1 6h3v1h-3zM8 6h1v1h-1z"/></svg>
<svg class="i" style="left:788px;top:56px" width="12" height="9" viewBox="0 0 12 9" shape-rendering="crispEdges"><path fill="#000000" d="M0 0h2v1h-2zM3 0h2v1h-2zM0 1h1v1h-1zM2 1h1v1h-1zM4 1h1v1h-1zM0 2h1v1h-1zM4 2h1v1h-1zM7 2h1v1h-1zM0 3h1v1h-1zM4 3h1v1h-1zM7 3h2v1h-2zM0 4h1v1h-1zM4 4h4v1h-4zM9 4h1v1h-1zM0 5h1v1h-1zM10 5h1v1h-1zM0 6h1v1h-1zM4 6h4v1h-4zM9 6h1v1h-1zM0 7h5v1h-5zM7 7h2v1h-2zM7 8h1v1h-1z"/><path fill="#ffffff" d="M1 1h1v1h-1zM3 1h1v1h-1zM1 2h3v1h-3zM1 3h3v1h-3zM1 4h3v1h-3zM1 5h3v1h-3zM1 6h3v1h-3z"/><path fill="#00f0f0" d="M8 4h1v1h-1zM4 5h6v1h-6zM8 6h1v1h-1z"/></svg>
<svg class="i" style="left:852px;top:53px" width="10" height="15" viewBox="0 0 10 15" shape-rendering="crispEdges"><path fill="#000000" d="M3 0h4v1h-4zM2 1h1v1h-1zM7 1h1v1h-1zM1 2h1v1h-1zM8 2h1v1h-1zM0 3h1v1h-1zM3 3h3v1h-3zM9 3h1v1h-1zM0 4h1v1h-1zM3 4h1v1h-1zM6 4h1v1h-1zM9 4h1v1h-1zM1 5h2v1h-2zM5 5h1v1h-1zM9 5h1v1h-1zM4 6h1v1h-1zM8 6h1v1h-1zM3 7h1v1h-1zM7 7h1v1h-1zM3 8h1v1h-1zM6 8h1v1h-1zM3 9h1v1h-1zM6 9h1v1h-1zM4 10h2v1h-2zM3 12h1v1h-1zM6 12h1v1h-1zM3 13h1v1h-1zM6 13h1v1h-1zM4 14h2v1h-2z"/><path fill="#ffff00" d="M3 1h4v1h-4zM2 2h6v1h-6zM1 3h2v1h-2zM6 3h3v1h-3zM1 4h2v1h-2zM7 4h2v1h-2zM6 5h3v1h-3zM5 6h3v1h-3zM4 7h3v1h-3zM4 8h2v1h-2zM4 9h2v1h-2zM4 12h2v1h-2zM4 13h2v1h-2z"/><path fill="#a0a0c8" d="M4 11h2v1h-2z"/></svg>
<svg class="i" style="left:826px;top:53px" width="16" height="15" viewBox="0 0 16 15" shape-rendering="crispEdges"><path fill="#000000" d="M8 0h5v1h-5zM7 1h1v1h-1zM13 1h1v1h-1zM6 2h1v1h-1zM14 2h1v1h-1zM5 3h1v1h-1zM15 3h1v1h-1zM5 4h1v1h-1zM15 4h1v1h-1zM5 5h1v1h-1zM15 5h1v1h-1zM5 6h1v1h-1zM15 6h1v1h-1zM5 7h1v1h-1zM15 7h1v1h-1zM6 8h1v1h-1zM14 8h1v1h-1zM5 9h1v1h-1zM7 9h1v1h-1zM13 9h1v1h-1zM4 10h1v1h-1zM6 10h1v1h-1zM8 10h5v1h-5zM3 11h1v1h-1zM5 11h1v1h-1zM2 12h1v1h-1zM4 12h1v1h-1zM1 13h1v1h-1zM3 13h1v1h-1zM0 14h3v1h-3z"/><path fill="#ffff00" d="M8 1h1v1h-1zM12 1h1v1h-1zM6 3h1v1h-1zM14 3h1v1h-1zM6 7h1v1h-1zM14 7h1v1h-1zM8 9h1v1h-1zM12 9h1v1h-1z"/><path fill="#ffffff" d="M9 1h3v1h-3zM7 2h7v1h-7zM7 3h1v1h-1zM10 3h1v1h-1zM13 3h1v1h-1zM6 4h3v1h-3zM11 4h4v1h-4zM6 5h3v1h-3zM12 5h3v1h-3zM6 6h3v1h-3zM11 6h4v1h-4zM7 7h1v1h-1zM10 7h4v1h-4zM7 8h7v1h-7zM9 9h3v1h-3zM5 10h1v1h-1zM4 11h1v1h-1zM3 12h1v1h-1zM2 13h1v1h-1z"/><path fill="#0080ff" d="M8 3h2v1h-2zM9 4h2v1h-2zM10 5h2v1h-2zM9 6h2v1h-2zM8 7h2v1h-2z"/><path fill="#808080" d="M11 3h2v1h-2z"/><path fill="#008080" d="M9 5h1v1h-1z"/></svg>
<svg class="i" style="left:486px;top:50px" width="74" height="22" viewBox="486 50 74 22"><g shape-rendering="crispEdges"><rect x="490" y="54" width="6" height="2" fill="#a0a0a0"/><rect x="497" y="60" width="6" height="2" fill="#a0a0a0"/><rect x="497" y="65" width="6" height="2" fill="#a0a0a0"/><rect x="499" y="53" width="1" height="1" fill="#a0a0a0"/><rect x="498" y="54" width="1" height="1" fill="#a0a0a0"/><rect x="499" y="54" width="1" height="1" fill="#a0a0a0"/><rect x="497" y="55" width="1" height="1" fill="#a0a0a0"/><rect x="498" y="55" width="1" height="1" fill="#a0a0a0"/><rect x="499" y="55" width="1" height="1" fill="#a0a0a0"/><rect x="500" y="55" width="1" height="1" fill="#a0a0a0"/><rect x="501" y="55" width="1" height="1" fill="#a0a0a0"/><rect x="498" y="56" width="1" height="1" fill="#a0a0a0"/><rect x="499" y="56" width="1" height="1" fill="#a0a0a0"/><rect x="499" y="57" width="1" height="1" fill="#a0a0a0"/><rect x="523" y="54" width="2" height="8" fill="#a0a0a0"/><rect x="520" y="57" width="8" height="2" fill="#a0a0a0"/><rect x="520" y="54" width="1" height="1" fill="#a0a0a0"/><rect x="521" y="55" width="1" height="1" fill="#a0a0a0"/><rect x="527" y="54" width="1" height="1" fill="#a0a0a0"/><rect x="526" y="55" width="1" height="1" fill="#a0a0a0"/><rect x="521" y="60" width="1" height="1" fill="#a0a0a0"/><rect x="520" y="61" width="1" height="1" fill="#a0a0a0"/><rect x="526" y="60" width="1" height="1" fill="#a0a0a0"/><rect x="527" y="61" width="1" height="1" fill="#a0a0a0"/><rect x="526" y="62" width="7" height="3" fill="#f8f8f8"/><rect x="526" y="63" width="1" height="1" fill="#a0a0a0"/><path d="M544.5 53.5h4l2 2v5l-2 2h-4l-2 -2v-5z" fill="#f8f8f8" stroke="#a0a0a0" stroke-width="1" shape-rendering="auto"/><path d="M542.5 56l2 1.500h4l2 -1.500" fill="none" stroke="#a0a0a0" stroke-width="1" shape-rendering="auto"/><path d="M550 59.5l-2 2h-3l4 -4.500z" fill="#a0a0a0" shape-rendering="auto"/><path d="M549.5 59.5h4l2 2v5l-2 2h-4l-2 -2v-5z" fill="#f8f8f8" stroke="#a0a0a0" stroke-width="1" shape-rendering="auto"/><path d="M547.5 62l2 1.500h4l2 -1.500" fill="none" stroke="#a0a0a0" stroke-width="1" shape-rendering="auto"/><path d="M555 65.5l-2 2h-3l4 -4.500z" fill="#a0a0a0" shape-rendering="auto"/><rect x="554" y="53" width="1" height="1" fill="#a0a0a0"/><rect x="553" y="54" width="1" height="1" fill="#a0a0a0"/><rect x="554" y="54" width="1" height="1" fill="#a0a0a0"/><rect x="552" y="55" width="1" height="1" fill="#a0a0a0"/><rect x="553" y="55" width="1" height="1" fill="#a0a0a0"/><rect x="554" y="55" width="1" height="1" fill="#a0a0a0"/><rect x="555" y="55" width="1" height="1" fill="#a0a0a0"/><rect x="556" y="55" width="1" height="1" fill="#a0a0a0"/><rect x="553" y="56" width="1" height="1" fill="#a0a0a0"/><rect x="554" y="56" width="1" height="1" fill="#a0a0a0"/><rect x="554" y="57" width="1" height="1" fill="#a0a0a0"/><path d="M490.5 56V57M495.5 56V57M490 57.5H496M493.5 58V68M494 62.5H497M494 67.5H497M497.5 62V63M502.5 62V63M497 63.5H503M497.5 67V68M502.5 67V68M497 68.5H503M501.5 56V59M525 61.5H534M525 65.5H534M525.5 62V65M533.5 62V65M556.5 56V59" fill="none" stroke="#a0a0a0" stroke-width="1"/></g></svg>
<svg class="i" style="left:765px;top:56px" width="12" height="9" viewBox="0 0 12 9" shape-rendering="crispEdges"><path fill="#a0a0a0" d="M7 0h2v1h-2zM10 0h2v1h-2zM7 1h1v1h-1zM9 1h1v1h-1zM11 1h1v1h-1zM4 2h1v1h-1zM7 2h1v1h-1zM11 2h1v1h-1zM3 3h2v1h-2zM7 3h1v1h-1zM11 3h1v1h-1zM2 4h6v1h-6zM11 4h1v1h-1zM1 5h7v1h-7zM11 5h1v1h-1zM2 6h6v1h-6zM11 6h1v1h-1zM3 7h2v1h-2zM7 7h5v1h-5zM4 8h1v1h-1z"/><path fill="#f6f6f6" d="M8 1h1v1h-1zM10 1h1v1h-1zM8 2h3v1h-3zM8 3h3v1h-3zM8 4h3v1h-3zM8 5h3v1h-3zM8 6h3v1h-3z"/></svg>
<svg class="i" style="left:454px;top:59px" width="5" height="3" viewBox="0 0 5 3" shape-rendering="crispEdges"><path d="M0 0H5L2.5 3Z" fill="#000"/></svg>
<svg class="i" style="left:750px;top:59px" width="5" height="3" viewBox="0 0 5 3" shape-rendering="crispEdges"><path d="M0 0H5L2.5 3Z" fill="#000"/></svg>
<svg class="i" style="left:806px;top:59px" width="5" height="3" viewBox="0 0 5 3" shape-rendering="crispEdges"><path d="M0 0H5L2.5 3Z" fill="#000"/></svg>
<div class="sep" style="left:511px;top:50px;width:1px;height:20px;background:#a0a0a0;"></div>
<div class="sep" style="left:699px;top:50px;width:1px;height:20px;background:#a0a0a0;"></div>
<div class="sep" style="left:819px;top:50px;width:1px;height:20px;background:#a0a0a0;"></div>
<div class="combo" style="left:561px;top:50px;width:134px;height:21px;border:1px solid #707070;border-radius:3px;background:linear-gradient(180deg,#f2f2f2 0,#ebebeb 45%,#dddddd 50%,#cfcfcf 100%);box-shadow:inset 0 0 0 1px rgba(255,255,255,.7);"></div>
<span class="t" style="left:565.5px;top:55px;font-size:12px;line-height:12px;letter-spacing:-0.289px;">--- In-Use List ---</span>
<svg class="i" style="left:683px;top:59px" width="7" height="4" viewBox="0 0 7 4" ><path d="M0 0H7L3.500 4Z" fill="#000"/></svg>
<div class="tbgroup" style="left:1194px;top:47px;width:86px;height:27px;border-left:1px solid #fff;border-bottom:1px solid #a0a0a0;border-right:1px solid #a0a0a0;"></div>
<svg class="i" style="left:1207px;top:52px" width="31" height="16" viewBox="0 0 31 16" shape-rendering="crispEdges"><path fill="#000000" d="M6 0h3v1h-3zM0 1h31v1h-31zM0 2h1v1h-1zM2 2h3v1h-3zM7 2h1v1h-1zM9 2h5v1h-5zM30 2h1v1h-1zM0 3h1v1h-1zM2 3h1v1h-1zM7 3h1v1h-1zM14 3h15v1h-15zM30 3h1v1h-1zM0 4h1v1h-1zM2 4h1v1h-1zM7 4h1v1h-1zM16 4h1v1h-1zM28 4h1v1h-1zM30 4h1v1h-1zM0 5h1v1h-1zM2 5h1v1h-1zM7 5h1v1h-1zM10 5h3v1h-3zM16 5h1v1h-1zM28 5h1v1h-1zM30 5h1v1h-1zM0 6h1v1h-1zM2 6h1v1h-1zM7 6h1v1h-1zM9 6h1v1h-1zM13 6h1v1h-1zM16 6h1v1h-1zM22 6h1v1h-1zM28 6h1v1h-1zM30 6h1v1h-1zM0 7h1v1h-1zM2 7h1v1h-1zM7 7h1v1h-1zM9 7h1v1h-1zM13 7h1v1h-1zM16 7h1v1h-1zM22 7h1v1h-1zM28 7h1v1h-1zM30 7h1v1h-1zM0 8h1v1h-1zM2 8h1v1h-1zM7 8h1v1h-1zM9 8h1v1h-1zM13 8h1v1h-1zM16 8h1v1h-1zM22 8h1v1h-1zM28 8h1v1h-1zM30 8h1v1h-1zM0 9h1v1h-1zM2 9h1v1h-1zM7 9h1v1h-1zM10 9h3v1h-3zM16 9h1v1h-1zM22 9h1v1h-1zM28 9h1v1h-1zM30 9h1v1h-1zM0 10h1v1h-1zM2 10h1v1h-1zM6 10h3v1h-3zM16 10h1v1h-1zM22 10h1v1h-1zM28 10h1v1h-1zM30 10h1v1h-1zM0 11h1v1h-1zM2 11h1v1h-1zM5 11h1v1h-1zM9 11h3v1h-3zM16 11h1v1h-1zM28 11h1v1h-1zM30 11h1v1h-1zM0 12h1v1h-1zM2 12h1v1h-1zM4 12h1v1h-1zM16 12h1v1h-1zM28 12h1v1h-1zM30 12h1v1h-1zM0 13h1v1h-1zM2 13h27v1h-27zM30 13h1v1h-1zM0 14h1v1h-1zM30 14h1v1h-1zM0 15h31v1h-31z"/><path fill="#d4d4d4" d="M1 2h1v1h-1zM8 2h1v1h-1zM14 2h16v1h-16zM1 3h1v1h-1zM8 3h6v1h-6zM1 4h1v1h-1zM8 4h8v1h-8zM1 5h1v1h-1zM8 5h2v1h-2zM13 5h3v1h-3zM1 6h1v1h-1zM8 6h1v1h-1zM14 6h2v1h-2zM1 7h1v1h-1zM8 7h1v1h-1zM14 7h2v1h-2zM1 8h1v1h-1zM8 8h1v1h-1zM14 8h2v1h-2zM1 9h1v1h-1zM8 9h2v1h-2zM13 9h3v1h-3zM1 10h1v1h-1zM9 10h7v1h-7zM1 11h1v1h-1zM12 11h4v1h-4zM1 12h1v1h-1zM12 12h4v1h-4zM1 13h1v1h-1z"/><path fill="#ffffff" d="M5 2h2v1h-2zM3 3h4v1h-4zM29 3h1v1h-1zM3 4h4v1h-4zM17 4h11v1h-11zM29 4h1v1h-1zM3 5h4v1h-4zM17 5h11v1h-11zM29 5h1v1h-1zM3 6h4v1h-4zM17 6h5v1h-5zM23 6h5v1h-5zM29 6h1v1h-1zM3 7h4v1h-4zM17 7h5v1h-5zM23 7h5v1h-5zM29 7h1v1h-1zM3 8h4v1h-4zM17 8h5v1h-5zM23 8h5v1h-5zM29 8h1v1h-1zM3 9h4v1h-4zM17 9h5v1h-5zM23 9h5v1h-5zM29 9h1v1h-1zM3 10h3v1h-3zM17 10h5v1h-5zM23 10h5v1h-5zM29 10h1v1h-1zM3 11h2v1h-2zM17 11h11v1h-11zM29 11h1v1h-1zM3 12h1v1h-1zM17 12h11v1h-11zM29 12h1v1h-1zM29 13h1v1h-1zM1 14h29v1h-29z"/><path fill="#fdfdfd" d="M10 6h3v1h-3zM10 7h3v1h-3zM10 8h3v1h-3z"/><path fill="#808080" d="M6 11h3v1h-3zM5 12h7v1h-7z"/></svg>
<div class="pausebtn" style="left:1243px;top:52px;width:32px;height:16px;background:#fff;border:1px solid #000;box-shadow:inset -2px -2px 0 #a0a0a0,inset 1px 1px 0 #dedede;"></div>
<svg class="i" style="left:1256px;top:57px" width="6" height="7" viewBox="0 0 6 7" shape-rendering="crispEdges"><path d="M1 0V7M5 0V7" stroke="#000" stroke-width="2"/></svg>
<div style="left:0px;top:74px;width:1280px;height:1px;background:#fdfdfd;"></div>
<div style="left:0px;top:100px;width:1280px;height:1px;background:#b4b4b4;"></div>
<div style="left:0px;top:101px;width:1280px;height:1px;background:#9a9a9a;"></div>
<div class="tbgroup" style="left:0px;top:74px;width:470px;height:27px;border-left:1px solid #fff;border-bottom:1px solid #a0a0a0;border-right:1px solid #a0a0a0;"></div>
<svg class="i" style="left:0;top:75px" width="480" height="25" viewBox="0 75 480 25"><g shape-rendering="crispEdges"><rect x="170" y="89" width="1" height="5" fill="#a0a0a0"/><rect x="172" y="89" width="1" height="5" fill="#a0a0a0"/><rect x="171" y="88" width="1" height="1" fill="#a0a0a0"/><rect x="171" y="94" width="1" height="1" fill="#a0a0a0"/><rect x="177" y="88" width="2" height="7" fill="#a0a0a0"/><rect x="176" y="89" width="1" height="1" fill="#a0a0a0"/><rect x="176" y="94" width="4" height="1" fill="#a0a0a0"/><rect x="193" y="89" width="1" height="5" fill="#a0a0a0"/><rect x="196" y="89" width="1" height="5" fill="#a0a0a0"/><rect x="194" y="88" width="2" height="1" fill="#a0a0a0"/><rect x="194" y="94" width="2" height="1" fill="#a0a0a0"/><rect x="192" y="90" width="1" height="3" fill="#a0a0a0"/><rect x="202" y="89" width="1" height="6" fill="#a0a0a0"/><rect x="281" y="82" width="12" height="7" fill="#a0a0a0"/><path d="M344 80H360L359 82L358 88L354 89L351 92V95H347V86L344 82Z" fill="#a0a0a0"/><rect x="356" y="82" width="1" height="2" fill="#f0f0f0"/><rect x="371" y="93" width="5" height="2" fill="#a0a0a0"/><rect x="402" y="85" width="5" height="10" fill="#a0a0a0"/><rect x="428" y="81" width="6" height="2" fill="#a0a0a0"/><rect x="435" y="88" width="6" height="2" fill="#a0a0a0"/><rect x="430" y="87" width="1" height="1" fill="#a0a0a0"/><rect x="430" y="89" width="1" height="1" fill="#a0a0a0"/><rect x="431" y="90" width="1" height="1" fill="#a0a0a0"/><rect x="433" y="90" width="1" height="1" fill="#a0a0a0"/><rect x="451" y="91" width="6" height="2" fill="#a0a0a0"/><rect x="455" y="83" width="2" height="10" fill="#a0a0a0"/><rect x="455" y="82" width="7" height="2" fill="#a0a0a0"/><path d="M22.5 83V85M18 85.5H27M20 87.5H25M22.5 88V90M60 87.5H72M63.5 83V92M68.5 83V92M83 87.5H87M106.5 82V93M103 84.5H106M103 90.5H106M114 87.5H118M111.5 83V86M111.5 89V92M128.5 86V94M128 86.5H135M128 93.5H135M124 86.5H128M124 92.5H128M150.5 86V94M150 86.5H157M150 93.5H157M146 86.5H150M146 92.5H150M174 82.5H182M174.5 83V89M181.5 83V94M176 93.5H181M199 88.5H206M214 82.5H225M214 92.5H225M214.5 82V93M224.5 82V93M218 85.5H222M218 87.5H222M218 90.5H222M216.5 85V87M216.5 89V91M222.5 85V87M222.5 89V91M236 84.5H248M236 92.5H248M235.5 85V92M248.5 85V92M238 83.5H240M244 83.5H246M238 87.5H241M239.5 86V89M243 87.5H246M279 89.5H293M279 91.5H293M279 90.5H281M282 90.5H284M292.5 90V91M307.5 82V94M322 87.5H325M336 87.5H339M322.5 86V87M338.5 86V87M372.500 83V91M375.500 83V91M400 87.5H409M400 89.5H409M400 91.5H409M400 93.5H409M428.5 83V86M433.5 83V86M428 85.5H434M435.5 90V93M440.5 90V93M435 92.5H441" fill="none" stroke="#a0a0a0" stroke-width="1"/></g><path d="M38 86.5L39.5 84.5L40.5 84.5L42.5 88.500L43.500 88.500L44.500 84.500L45.500 84.500L47 88.500L48 88.500L49 84.500L50 84.500L51 86.500M63.500 83.500L68 87.500L63.500 91.500M91 83L85.500 92M87.500 88.500L91.500 92.500M87.500 91V88.500H90M106.500 82.500L115 87.500L106.500 92.500M135 86.500L139.5 90L135 93.500M157 86.500L161.5 90L157 93.500M191.500 87L194.500 82.500L198 87M200 89L202.500 94L205 89M302 82L307.500 87.500L313 82M325.500 87.500a5 5 0 1 0 10 0a5 5 0 1 0 -10 0M354 91.500H356V94.500H354M358 91H360M359 91V94.500M371.500 80.500H375.500Q377.500 80.500 377.500 83V90Q377.500 92.500 375.500 92.500H371.500Q369.500 92.500 369.500 90V83Q369.500 80.500 371.500 80.500Z" fill="none" stroke="#a0a0a0" stroke-width="1.1"/><text x="124.5" y="85.6" font-size="6.2" textLength="11" lengthAdjust="spacingAndGlyphs" fill="#a0a0a0" font-weight="bold" font-family="'Liberation Sans',sans-serif">TTL</text><text x="145.5" y="85.6" font-size="6.2" textLength="17.5" lengthAdjust="spacingAndGlyphs" fill="#a0a0a0" font-weight="bold" font-family="'Liberation Sans',sans-serif">CMOS</text><text x="399.5" y="83.2" font-size="5" textLength="9.5" lengthAdjust="spacingAndGlyphs" fill="#a0a0a0" font-weight="bold" font-family="'Liberation Sans',sans-serif">MCU</text><text x="327.3" y="90.6" font-size="8.5" textLength="6.4" lengthAdjust="spacingAndGlyphs" fill="#a0a0a0" font-weight="bold" font-family="'Liberation Sans',sans-serif">M</text></svg>
<span class="t" style="left:256.5px;top:84px;font-size:7.5px;line-height:7.5px;color:#949494;font-weight:bold;letter-spacing:-0.812px;">MISC</span>
<div class="sep" style="left:388px;top:77px;width:1px;height:20px;background:#a0a0a0;"></div>
<div class="sep" style="left:418px;top:77px;width:1px;height:20px;background:#a0a0a0;"></div>
<div class="tbgroup" style="left:480px;top:74px;width:102px;height:27px;border-left:1px solid #fff;border-bottom:1px solid #a0a0a0;border-right:1px solid #a0a0a0;"></div>
<svg class="i" style="left:494px;top:80px" width="16" height="16" viewBox="0 0 16 16" ><path d="M0 0.500L4.500 4.500V8.500L0 12Z" fill="#a0a0a0"/><path d="M16.3 6.5L16.3 9.5L14.4 10.0L14.4 10.0L15.4 11.8L13.3 13.9L11.5 12.9L11.5 12.9L11.0 14.8L8.0 14.8L7.5 12.9L7.5 12.9L5.7 13.9L3.6 11.8L4.6 10.0L4.6 10.0L2.7 9.5L2.7 6.5L4.6 6.0L4.6 6.0L3.6 4.2L5.7 2.1L7.5 3.1L7.5 3.1L8.0 1.2L11.0 1.2L11.5 3.1L11.5 3.1L13.3 2.1L15.4 4.2L14.4 6.0L14.4 6.0Z" fill="#a0a0a0"/><circle cx="9.500" cy="8" r="2.900" fill="#f4f4f4"/><circle cx="9.500" cy="8" r="1.300" fill="#a0a0a0"/></svg>
<div class="tbchecked" style="left:513px;top:77px;width:22px;height:20px;background:#f7f7f7;border:1px solid;border-color:#a8a8a8 #fff #fff #a8a8a8;"></div>
<svg class="i" style="left:522px;top:82px" width="8" height="14" viewBox="0 0 8 14" ><path d="M0.300 0L7.300 6.600L0.300 13.200Z" fill="#a0a0a0"/></svg>
<svg class="i" style="left:542px;top:83px" width="8" height="9" viewBox="0 0 8 9" shape-rendering="crispEdges"><rect x="0.500" y="0.500" width="2" height="8" fill="#0000ff" stroke="#000"/><rect x="5.500" y="0.500" width="2" height="8" fill="#0000ff" stroke="#000"/></svg>
<svg class="i" style="left:563px;top:83px" width="10" height="9" viewBox="0 0 10 9" shape-rendering="crispEdges"><rect x="0.500" y="0.500" width="9" height="8" fill="#ff0000" stroke="#000"/></svg>
<div class="tbgroup" style="left:666px;top:74px;width:321px;height:27px;border-left:1px solid #fff;border-bottom:1px solid #a0a0a0;border-right:1px solid #a0a0a0;"></div>
<svg class="i" style="left:680px;top:80px" width="16" height="15" viewBox="0 0 16 15" ><defs><linearGradient id="bg680" x1="0" y1="0" x2="1" y2="1"><stop offset="0" stop-color="#1684ff"/><stop offset=".5" stop-color="#7cbcff"/><stop offset="1" stop-color="#d2e9ff"/></linearGradient></defs><rect x="-0.500" y="-0.500" width="17" height="16" fill="none" stroke="#fdfdf6" stroke-width="1"/><rect x="0.500" y="0.500" width="15" height="14" fill="url(#bg680)" stroke="#0000ff" stroke-width="1" shape-rendering="crispEdges"/><path d="M3.500 2V13M4 2.500L14 7.500L4 12.500M1 4.500H3.500M1 10.500H3.500M14 7.500H15" fill="none" stroke="#000" stroke-width="1"/></svg><svg class="i" style="left:701px;top:86px" width="5" height="3" viewBox="0 0 5 3" shape-rendering="crispEdges"><path d="M0 0H5L2.500 3Z" fill="#000"/></svg>
<svg class="i" style="left:714px;top:80px" width="16" height="15" viewBox="0 0 16 15" ><defs><linearGradient id="bg714" x1="0" y1="0" x2="1" y2="1"><stop offset="0" stop-color="#1684ff"/><stop offset=".5" stop-color="#7cbcff"/><stop offset="1" stop-color="#d2e9ff"/></linearGradient></defs><rect x="-0.500" y="-0.500" width="17" height="16" fill="none" stroke="#fdfdf6" stroke-width="1"/><rect x="0.500" y="0.500" width="15" height="14" fill="url(#bg714)" stroke="#0000ff" stroke-width="1" shape-rendering="crispEdges"/><path d="M1.500 7.500H3.500L4.500 6.500L6 8.500L7.500 6.500L9 8.500L10.500 6.500L11.500 7.500H14.500" fill="none" stroke="#000" stroke-width="1.100"/></svg><svg class="i" style="left:735px;top:86px" width="5" height="3" viewBox="0 0 5 3" shape-rendering="crispEdges"><path d="M0 0H5L2.500 3Z" fill="#000"/></svg>
<svg class="i" style="left:748px;top:80px" width="16" height="15" viewBox="0 0 16 15" ><defs><linearGradient id="bg748" x1="0" y1="0" x2="1" y2="1"><stop offset="0" stop-color="#1684ff"/><stop offset=".5" stop-color="#7cbcff"/><stop offset="1" stop-color="#d2e9ff"/></linearGradient></defs><rect x="-0.500" y="-0.500" width="17" height="16" fill="none" stroke="#fdfdf6" stroke-width="1"/><rect x="0.500" y="0.500" width="15" height="14" fill="url(#bg748)" stroke="#0000ff" stroke-width="1" shape-rendering="crispEdges"/><path d="M2 7.500H14M10 4V11" stroke="#000" stroke-width="1.300"/><path d="M5 4V11L9.500 7.500Z" fill="#000"/></svg><svg class="i" style="left:769px;top:86px" width="5" height="3" viewBox="0 0 5 3" shape-rendering="crispEdges"><path d="M0 0H5L2.500 3Z" fill="#000"/></svg>
<svg class="i" style="left:782px;top:80px" width="16" height="15" viewBox="0 0 16 15" ><defs><linearGradient id="bg782" x1="0" y1="0" x2="1" y2="1"><stop offset="0" stop-color="#1684ff"/><stop offset=".5" stop-color="#7cbcff"/><stop offset="1" stop-color="#d2e9ff"/></linearGradient></defs><rect x="-0.500" y="-0.500" width="17" height="16" fill="none" stroke="#fdfdf6" stroke-width="1"/><rect x="0.500" y="0.500" width="15" height="14" fill="url(#bg782)" stroke="#0000ff" stroke-width="1" shape-rendering="crispEdges"/><path d="M2 7.500H6M6.500 4V11M8.500 1.500V5M8.500 6V9M8.500 10V13.500M8.500 7.500H13M8.500 2.500H11M8.500 12.500H11" fill="none" stroke="#000" stroke-width="1.200"/><path d="M8.500 7.500L11.500 5.800V9.200Z" fill="#000"/></svg><svg class="i" style="left:803px;top:86px" width="5" height="3" viewBox="0 0 5 3" shape-rendering="crispEdges"><path d="M0 0H5L2.500 3Z" fill="#000"/></svg>
<svg class="i" style="left:816px;top:80px" width="16" height="15" viewBox="0 0 16 15" ><defs><linearGradient id="bg816" x1="0" y1="0" x2="1" y2="1"><stop offset="0" stop-color="#1684ff"/><stop offset=".5" stop-color="#7cbcff"/><stop offset="1" stop-color="#d2e9ff"/></linearGradient></defs><rect x="-0.500" y="-0.500" width="17" height="16" fill="none" stroke="#fdfdf6" stroke-width="1"/><rect x="0.500" y="0.500" width="15" height="14" fill="url(#bg816)" stroke="#0000ff" stroke-width="1" shape-rendering="crispEdges"/><rect x="4.200" y="3.700" width="7.600" height="7.600" fill="none" stroke="#000" stroke-width="1.500"/><rect x="6" y="5.200" width="4" height="1.800" fill="#00e000"/><rect x="6" y="9" width="1" height="1" fill="#000"/><rect x="9" y="9" width="1" height="1" fill="#000"/></svg><svg class="i" style="left:837px;top:86px" width="5" height="3" viewBox="0 0 5 3" shape-rendering="crispEdges"><path d="M0 0H5L2.500 3Z" fill="#000"/></svg>
<svg class="i" style="left:850px;top:80px" width="16" height="15" viewBox="0 0 16 15" ><defs><linearGradient id="bg850" x1="0" y1="0" x2="1" y2="1"><stop offset="0" stop-color="#1684ff"/><stop offset=".5" stop-color="#7cbcff"/><stop offset="1" stop-color="#d2e9ff"/></linearGradient></defs><rect x="-0.500" y="-0.500" width="17" height="16" fill="none" stroke="#fdfdf6" stroke-width="1"/><rect x="0.500" y="0.500" width="15" height="14" fill="url(#bg850)" stroke="#0000ff" stroke-width="1" shape-rendering="crispEdges"/><text x="3.600" y="11.300" font-size="10.500" textLength="8.800" lengthAdjust="spacingAndGlyphs" font-family="'Liberation Sans',sans-serif">M</text></svg><svg class="i" style="left:871px;top:86px" width="5" height="3" viewBox="0 0 5 3" shape-rendering="crispEdges"><path d="M0 0H5L2.500 3Z" fill="#000"/></svg>
<svg class="i" style="left:884px;top:80px" width="16" height="15" viewBox="0 0 16 15" ><defs><linearGradient id="bg884" x1="0" y1="0" x2="1" y2="1"><stop offset="0" stop-color="#1684ff"/><stop offset=".5" stop-color="#7cbcff"/><stop offset="1" stop-color="#d2e9ff"/></linearGradient></defs><rect x="-0.500" y="-0.500" width="17" height="16" fill="none" stroke="#fdfdf6" stroke-width="1"/><rect x="0.500" y="0.500" width="15" height="14" fill="url(#bg884)" stroke="#0000ff" stroke-width="1" shape-rendering="crispEdges"/><path d="M7.500 2V6M3 6.500H13M7.500 9.500V13.500" fill="none" stroke="#000" stroke-width="1.100"/><path d="M5 9H11" stroke="#000" stroke-width="1.700"/></svg><svg class="i" style="left:905px;top:86px" width="5" height="3" viewBox="0 0 5 3" shape-rendering="crispEdges"><path d="M0 0H5L2.500 3Z" fill="#000"/></svg>
<svg class="i" style="left:918px;top:80px" width="16" height="15" viewBox="0 0 16 15" ><defs><linearGradient id="bg918" x1="0" y1="0" x2="1" y2="1"><stop offset="0" stop-color="#1684ff"/><stop offset=".5" stop-color="#7cbcff"/><stop offset="1" stop-color="#d2e9ff"/></linearGradient></defs><rect x="-0.500" y="-0.500" width="17" height="16" fill="none" stroke="#fdfdf6" stroke-width="1"/><rect x="0.500" y="0.500" width="15" height="14" fill="url(#bg918)" stroke="#0000ff" stroke-width="1" shape-rendering="crispEdges"/><path d="M1 7.500H2.500L3.500 6.500L5 7.500M10 6.500L11.500 8.500L13 6.500H14" fill="none" stroke="#000" stroke-width="1.100"/><path d="M5.300 7.800L6.500 9M8.800 5.300L9.800 6.500" stroke="#f00000" stroke-width="1.300"/></svg><svg class="i" style="left:939px;top:86px" width="5" height="3" viewBox="0 0 5 3" shape-rendering="crispEdges"><path d="M0 0H5L2.500 3Z" fill="#000"/></svg>
<svg class="i" style="left:952px;top:80px" width="16" height="15" viewBox="0 0 16 15" ><defs><linearGradient id="bg952" x1="0" y1="0" x2="1" y2="1"><stop offset="0" stop-color="#1684ff"/><stop offset=".5" stop-color="#7cbcff"/><stop offset="1" stop-color="#d2e9ff"/></linearGradient></defs><rect x="-0.500" y="-0.500" width="17" height="16" fill="none" stroke="#fdfdf6" stroke-width="1"/><rect x="0.500" y="0.500" width="15" height="14" fill="url(#bg952)" stroke="#0000ff" stroke-width="1" shape-rendering="crispEdges"/><path d="M7.500 2L13 7.500L7.500 13L2 7.500Z" fill="none" stroke="#000" stroke-width="1.200"/><path d="M5 8Q6 5.500 7.500 7.500T10 7" fill="none" stroke="#000" stroke-width="1"/></svg><svg class="i" style="left:973px;top:86px" width="5" height="3" viewBox="0 0 5 3" shape-rendering="crispEdges"><path d="M0 0H5L2.500 3Z" fill="#000"/></svg>
<div class="tbgroup" style="left:1156px;top:74px;width:124px;height:27px;border-left:1px solid #fff;border-bottom:1px solid #a0a0a0;border-right:1px solid #a0a0a0;"></div>
<svg class="i" style="left:1171px;top:80px" width="16" height="16" viewBox="0 0 16 16" shape-rendering="crispEdges"><path fill="#000000" d="M4 0h4v1h-4zM2 1h2v1h-2zM8 1h2v1h-2zM1 2h1v1h-1zM10 2h1v1h-1zM1 3h1v1h-1zM10 3h1v1h-1zM0 4h1v1h-1zM11 4h1v1h-1zM0 5h1v1h-1zM11 5h1v1h-1zM0 6h1v1h-1zM11 6h1v1h-1zM0 7h1v1h-1zM11 7h1v1h-1zM1 8h1v1h-1zM10 8h1v1h-1zM1 9h1v1h-1zM2 10h2v1h-2zM8 10h1v1h-1zM4 11h4v1h-4z"/><path fill="#ffffff" d="M4 1h4v1h-4zM2 2h8v1h-8zM2 3h3v1h-3zM7 3h3v1h-3zM1 4h4v1h-4zM7 4h4v1h-4zM1 5h2v1h-2zM9 5h2v1h-2zM1 6h2v1h-2zM9 6h2v1h-2zM1 7h4v1h-4zM7 7h4v1h-4zM2 8h3v1h-3zM7 8h3v1h-3zM2 9h7v1h-7zM4 10h4v1h-4zM9 10h1v1h-1zM10 11h1v1h-1zM11 12h1v1h-1z"/><path fill="#800000" d="M5 3h2v1h-2zM5 4h2v1h-2zM3 5h6v1h-6zM3 6h6v1h-6zM5 7h2v1h-2zM5 8h2v1h-2z"/><path fill="#000080" d="M9 9h3v1h-3zM10 10h3v1h-3zM9 11h1v1h-1zM11 11h3v1h-3zM10 12h1v1h-1zM12 12h2v1h-2zM11 13h3v1h-3zM11 14h2v1h-2z"/></svg>
<svg class="i" style="left:1193px;top:80px" width="16" height="16" viewBox="0 0 16 16" shape-rendering="crispEdges"><path fill="#000000" d="M4 0h4v1h-4zM2 1h2v1h-2zM8 1h2v1h-2zM1 2h1v1h-1zM10 2h1v1h-1zM1 3h1v1h-1zM10 3h1v1h-1zM0 4h1v1h-1zM11 4h1v1h-1zM0 5h1v1h-1zM11 5h1v1h-1zM0 6h1v1h-1zM11 6h1v1h-1zM0 7h1v1h-1zM11 7h1v1h-1zM1 8h1v1h-1zM10 8h1v1h-1zM1 9h1v1h-1zM2 10h2v1h-2zM8 10h1v1h-1zM4 11h4v1h-4z"/><path fill="#ffffff" d="M4 1h4v1h-4zM2 2h8v1h-8zM2 3h8v1h-8zM1 4h10v1h-10zM1 5h2v1h-2zM9 5h2v1h-2zM1 6h2v1h-2zM9 6h2v1h-2zM1 7h10v1h-10zM2 8h8v1h-8zM2 9h7v1h-7zM4 10h4v1h-4zM9 10h1v1h-1zM10 11h1v1h-1zM11 12h1v1h-1z"/><path fill="#008000" d="M3 5h6v1h-6zM3 6h6v1h-6z"/><path fill="#000080" d="M9 9h3v1h-3zM10 10h3v1h-3zM9 11h1v1h-1zM11 11h3v1h-3zM10 12h1v1h-1zM12 12h2v1h-2zM11 13h3v1h-3zM11 14h2v1h-2z"/></svg>
<svg class="i" style="left:1215px;top:80px" width="16" height="16" viewBox="0 0 16 16" shape-rendering="crispEdges"><path fill="#000000" d="M4 0h4v1h-4zM2 1h2v1h-2zM8 1h2v1h-2zM1 2h1v1h-1zM10 2h1v1h-1zM1 3h1v1h-1zM10 3h1v1h-1zM0 4h1v1h-1zM3 4h6v1h-6zM11 4h1v1h-1zM0 5h1v1h-1zM3 5h1v1h-1zM8 5h1v1h-1zM11 5h1v1h-1zM0 6h1v1h-1zM3 6h1v1h-1zM8 6h1v1h-1zM11 6h1v1h-1zM0 7h1v1h-1zM3 7h1v1h-1zM8 7h1v1h-1zM11 7h1v1h-1zM1 8h1v1h-1zM3 8h6v1h-6zM10 8h1v1h-1zM1 9h1v1h-1zM2 10h2v1h-2zM8 10h1v1h-1zM4 11h4v1h-4z"/><path fill="#ffffff" d="M4 1h4v1h-4zM2 2h8v1h-8zM2 3h8v1h-8zM1 4h2v1h-2zM9 4h2v1h-2zM1 5h2v1h-2zM4 5h4v1h-4zM9 5h2v1h-2zM1 6h2v1h-2zM4 6h4v1h-4zM9 6h2v1h-2zM1 7h2v1h-2zM4 7h4v1h-4zM9 7h2v1h-2zM2 8h1v1h-1zM9 8h1v1h-1zM2 9h7v1h-7zM4 10h4v1h-4zM9 10h1v1h-1zM10 11h1v1h-1zM11 12h1v1h-1z"/><path fill="#000080" d="M9 9h3v1h-3zM10 10h3v1h-3zM9 11h1v1h-1zM11 11h3v1h-3zM10 12h1v1h-1zM12 12h2v1h-2zM11 13h3v1h-3zM11 14h2v1h-2z"/></svg>
<svg class="i" style="left:1236px;top:80px" width="17" height="16" viewBox="0 0 17 16" shape-rendering="crispEdges"><path fill="#000000" d="M5 0h4v1h-4zM13 0h3v1h-3zM3 1h2v1h-2zM9 1h2v1h-2zM14 1h2v1h-2zM2 2h1v1h-1zM11 2h1v1h-1zM15 2h1v1h-1zM2 3h1v1h-1zM11 3h1v1h-1zM1 4h1v1h-1zM12 4h1v1h-1zM1 5h1v1h-1zM12 5h1v1h-1zM1 6h1v1h-1zM12 6h1v1h-1zM1 7h1v1h-1zM12 7h1v1h-1zM2 8h1v1h-1zM11 8h1v1h-1zM2 9h1v1h-1zM3 10h2v1h-2zM9 10h1v1h-1zM5 11h4v1h-4zM0 12h1v1h-1zM0 13h2v1h-2zM0 14h3v1h-3z"/><path fill="#ffffff" d="M5 1h4v1h-4zM3 2h8v1h-8zM3 3h8v1h-8zM2 4h10v1h-10zM2 5h10v1h-10zM2 6h10v1h-10zM2 7h10v1h-10zM3 8h8v1h-8zM3 9h7v1h-7zM5 10h4v1h-4zM10 10h1v1h-1zM11 11h1v1h-1zM12 12h1v1h-1z"/><path fill="#000080" d="M10 9h3v1h-3zM11 10h3v1h-3zM10 11h1v1h-1zM12 11h3v1h-3zM11 12h1v1h-1zM13 12h2v1h-2zM12 13h3v1h-3zM12 14h2v1h-2z"/></svg>
<svg class="i" style="left:1258px;top:80px" width="16" height="15" viewBox="0 0 16 15" shape-rendering="crispEdges"><path fill="#000000" d="M1 0h14v1h-14zM0 1h1v1h-1zM15 1h1v1h-1zM0 2h1v1h-1zM2 2h12v1h-12zM15 2h1v1h-1zM0 3h1v1h-1zM2 3h1v1h-1zM13 3h1v1h-1zM15 3h1v1h-1zM0 4h1v1h-1zM2 4h1v1h-1zM4 4h3v1h-3zM13 4h1v1h-1zM15 4h1v1h-1zM0 5h1v1h-1zM2 5h1v1h-1zM13 5h1v1h-1zM15 5h1v1h-1zM0 6h1v1h-1zM2 6h1v1h-1zM4 6h8v1h-8zM13 6h1v1h-1zM15 6h1v1h-1zM0 7h1v1h-1zM2 7h1v1h-1zM13 7h1v1h-1zM15 7h1v1h-1zM0 8h1v1h-1zM2 8h1v1h-1zM4 8h5v1h-5zM13 8h1v1h-1zM15 8h1v1h-1zM0 9h1v1h-1zM2 9h1v1h-1zM13 9h1v1h-1zM15 9h1v1h-1zM0 10h1v1h-1zM2 10h1v1h-1zM4 10h7v1h-7zM13 10h1v1h-1zM15 10h1v1h-1zM0 11h1v1h-1zM2 11h1v1h-1zM13 11h1v1h-1zM15 11h1v1h-1zM0 12h1v1h-1zM2 12h12v1h-12zM15 12h1v1h-1zM0 13h1v1h-1zM15 13h1v1h-1zM1 14h14v1h-14z"/><path fill="#ffffff" d="M1 1h14v1h-14zM1 2h1v1h-1zM14 2h1v1h-1zM1 3h1v1h-1zM4 3h1v1h-1zM6 3h1v1h-1zM8 3h1v1h-1zM10 3h1v1h-1zM12 3h1v1h-1zM14 3h1v1h-1zM1 4h1v1h-1zM3 4h1v1h-1zM8 4h1v1h-1zM10 4h1v1h-1zM12 4h1v1h-1zM14 4h1v1h-1zM1 5h1v1h-1zM3 5h1v1h-1zM5 5h1v1h-1zM7 5h1v1h-1zM9 5h1v1h-1zM11 5h1v1h-1zM14 5h1v1h-1zM1 6h1v1h-1zM3 6h1v1h-1zM14 6h1v1h-1zM1 7h1v1h-1zM4 7h1v1h-1zM6 7h1v1h-1zM8 7h1v1h-1zM10 7h1v1h-1zM12 7h1v1h-1zM14 7h1v1h-1zM1 8h1v1h-1zM3 8h1v1h-1zM10 8h1v1h-1zM12 8h1v1h-1zM14 8h1v1h-1zM1 9h1v1h-1zM3 9h1v1h-1zM5 9h1v1h-1zM7 9h1v1h-1zM9 9h1v1h-1zM11 9h1v1h-1zM14 9h1v1h-1zM1 10h1v1h-1zM12 10h1v1h-1zM14 10h1v1h-1zM1 11h1v1h-1zM4 11h1v1h-1zM6 11h1v1h-1zM8 11h1v1h-1zM10 11h1v1h-1zM12 11h1v1h-1zM14 11h1v1h-1zM1 12h1v1h-1zM14 12h1v1h-1zM1 13h14v1h-14z"/><path fill="#00ffff" d="M3 3h1v1h-1zM5 3h1v1h-1zM7 3h1v1h-1zM9 3h1v1h-1zM11 3h1v1h-1zM7 4h1v1h-1zM9 4h1v1h-1zM11 4h1v1h-1zM4 5h1v1h-1zM6 5h1v1h-1zM8 5h1v1h-1zM10 5h1v1h-1zM12 5h1v1h-1zM12 6h1v1h-1zM3 7h1v1h-1zM5 7h1v1h-1zM7 7h1v1h-1zM9 7h1v1h-1zM11 7h1v1h-1zM9 8h1v1h-1zM11 8h1v1h-1zM4 9h1v1h-1zM6 9h1v1h-1zM8 9h1v1h-1zM10 9h1v1h-1zM12 9h1v1h-1zM3 10h1v1h-1zM11 10h1v1h-1zM3 11h1v1h-1zM5 11h1v1h-1zM7 11h1v1h-1zM9 11h1v1h-1zM11 11h1v1h-1z"/></svg>
<!-- p_left -->
<div class="dtb-header" style="left:3px;top:105px;width:151px;height:18px;background:linear-gradient(90deg,#bccde1 0,#c9d7e7 50%,#dde7f1 100%);"></div>
<span class="t" style="left:6.5px;top:107px;font-size:12px;line-height:12px;color:#444f62;letter-spacing:0.011px;">Design Toolbox</span>
<div class="btn3d" style="left:157px;top:107px;width:14px;height:14px;background:#f0f0f0;border:1px solid;border-color:#fff #696969 #696969 #fff;box-shadow:inset -1px -1px 0 #a0a0a0;"></div>
<svg class="i" style="left:160px;top:111px" width="7" height="4" viewBox="0 0 7 4" ><path d="M0 4L3.500 0L7 4Z" fill="#a0a0a0"/></svg>
<div class="btn3d" style="left:173px;top:107px;width:14px;height:14px;background:#f0f0f0;border:1px solid;border-color:#fff #696969 #696969 #fff;box-shadow:inset -1px -1px 0 #a0a0a0;"></div>
<svg class="i" style="left:176px;top:110px" width="8" height="7" viewBox="0 0 8 7" ><path d="M1.300 1.300L6.700 5.700M6.700 1.300L1.300 5.700" stroke="#000" stroke-width="1.700"/></svg>
<div class="dtb-frame" style="left:4px;top:126px;width:183px;height:640px;border:1px solid;border-color:#fff #808080 #808080 #fff;box-shadow:inset -1px -1px 0 #c0c0c0;"></div>
<svg class="i" style="left:11px;top:134px" width="13" height="14" viewBox="0 0 13 14" shape-rendering="crispEdges"><path fill="#000080" d="M0 0h10v1h-10zM0 1h1v1h-1zM9 1h2v1h-2zM0 2h1v1h-1zM9 2h1v1h-1zM11 2h1v1h-1zM0 3h1v1h-1zM9 3h3v1h-3zM0 4h1v1h-1zM0 5h1v1h-1zM0 6h1v1h-1zM0 7h1v1h-1zM0 8h1v1h-1zM0 9h1v1h-1zM0 10h1v1h-1zM0 11h1v1h-1zM0 12h1v1h-1zM0 13h1v1h-1z"/><path fill="#ffffff" d="M1 1h8v1h-8zM1 2h8v1h-8zM1 3h8v1h-8zM1 4h11v1h-11zM1 5h11v1h-11zM1 6h11v1h-11zM1 7h11v1h-11zM1 8h11v1h-11zM1 9h10v1h-10zM1 10h9v1h-9zM1 11h8v1h-8zM1 12h7v1h-7z"/><path fill="#ffff00" d="M10 2h1v1h-1zM11 9h1v1h-1zM10 10h2v1h-2zM9 11h3v1h-3zM8 12h4v1h-4z"/><path fill="#000000" d="M12 3h1v1h-1zM12 4h1v1h-1zM12 5h1v1h-1zM12 6h1v1h-1zM12 7h1v1h-1zM12 8h1v1h-1zM12 9h1v1h-1zM12 10h1v1h-1zM12 11h1v1h-1zM12 12h1v1h-1zM1 13h12v1h-12z"/></svg>
<svg class="i" style="left:36px;top:134px" width="16" height="14" viewBox="0 0 16 14" shape-rendering="crispEdges"><path fill="#000000" d="M10 0h2v1h-2zM9 1h1v1h-1zM12 1h1v1h-1zM15 1h1v1h-1zM8 2h1v1h-1zM13 2h3v1h-3zM1 3h3v1h-3zM13 3h3v1h-3zM0 4h1v1h-1zM4 4h6v1h-6zM12 4h4v1h-4zM0 5h1v1h-1zM10 5h1v1h-1zM0 6h1v1h-1zM10 6h1v1h-1zM0 7h1v1h-1zM10 7h1v1h-1zM0 8h1v1h-1zM5 8h10v1h-10zM0 9h1v1h-1zM4 9h1v1h-1zM13 9h1v1h-1zM0 10h1v1h-1zM3 10h1v1h-1zM12 10h1v1h-1zM0 11h1v1h-1zM2 11h1v1h-1zM11 11h1v1h-1zM0 12h2v1h-2zM10 12h1v1h-1zM0 13h10v1h-10z"/><path fill="#ffffff" d="M1 4h3v1h-3zM2 5h1v1h-1zM4 5h6v1h-6zM1 6h1v1h-1zM3 6h1v1h-1zM5 6h1v1h-1zM7 6h1v1h-1zM9 6h1v1h-1zM2 7h1v1h-1zM6 7h1v1h-1zM8 7h1v1h-1zM1 8h1v1h-1zM3 8h1v1h-1zM2 9h1v1h-1zM6 9h7v1h-7zM1 10h1v1h-1zM5 10h1v1h-1zM7 10h1v1h-1zM9 10h1v1h-1zM11 10h1v1h-1zM4 11h1v1h-1zM6 11h1v1h-1zM8 11h1v1h-1zM10 11h1v1h-1z"/><path fill="#ffff00" d="M1 5h1v1h-1zM3 5h1v1h-1zM2 6h1v1h-1zM4 6h1v1h-1zM6 6h1v1h-1zM8 6h1v1h-1zM1 7h1v1h-1zM3 7h1v1h-1zM5 7h1v1h-1zM7 7h1v1h-1zM9 7h1v1h-1zM2 8h1v1h-1zM1 9h1v1h-1zM5 9h1v1h-1zM4 10h1v1h-1zM6 10h1v1h-1zM8 10h1v1h-1zM10 10h1v1h-1zM3 11h1v1h-1zM5 11h1v1h-1zM7 11h1v1h-1zM9 11h1v1h-1zM2 12h8v1h-8z"/><path fill="#000080" d="M4 7h1v1h-1zM4 8h1v1h-1zM3 9h1v1h-1zM2 10h1v1h-1zM1 11h1v1h-1z"/></svg>
<svg class="i" style="left:63px;top:134px" width="14" height="14" viewBox="0 0 14 14" shape-rendering="crispEdges"><path fill="#c4c4c4" d="M1 0h12v1h-12zM0 1h1v1h-1zM0 2h1v1h-1zM0 3h1v1h-1zM0 4h1v1h-1zM0 5h1v1h-1zM0 6h1v1h-1zM0 7h1v1h-1zM0 8h1v1h-1zM0 9h1v1h-1zM5 9h4v1h-4zM0 10h1v1h-1zM0 11h1v1h-1zM0 12h1v1h-1z"/><path fill="#fdfdfd" d="M1 1h2v1h-2zM12 1h1v1h-1zM1 2h2v1h-2zM1 3h2v1h-2zM12 3h1v1h-1zM1 4h2v1h-2zM12 4h1v1h-1zM1 5h2v1h-2zM12 5h1v1h-1zM1 6h2v1h-2zM12 6h1v1h-1zM1 7h3v1h-3zM11 7h2v1h-2zM1 8h12v1h-12zM1 9h4v1h-4zM10 9h3v1h-3zM1 10h4v1h-4zM10 10h3v1h-3zM1 11h4v1h-4zM10 11h3v1h-3zM1 12h4v1h-4zM10 12h3v1h-3z"/><path fill="#b4b4c8" d="M3 1h1v1h-1zM11 1h1v1h-1zM3 2h1v1h-1zM11 2h1v1h-1zM3 3h1v1h-1zM11 3h1v1h-1zM3 4h1v1h-1zM11 4h1v1h-1zM3 5h1v1h-1zM11 5h1v1h-1zM3 6h1v1h-1zM11 6h1v1h-1zM4 7h7v1h-7z"/><path fill="#ffff00" d="M4 1h1v1h-1zM7 1h1v1h-1zM10 1h1v1h-1zM5 2h1v1h-1zM8 2h1v1h-1zM6 3h1v1h-1zM9 3h1v1h-1zM4 4h1v1h-1zM7 4h1v1h-1zM10 4h1v1h-1zM5 5h1v1h-1zM8 5h1v1h-1zM4 6h1v1h-1zM6 6h1v1h-1zM9 6h1v1h-1z"/><path fill="#ffffff" d="M5 1h2v1h-2zM8 1h2v1h-2zM4 2h1v1h-1zM6 2h2v1h-2zM9 2h2v1h-2zM4 3h2v1h-2zM7 3h2v1h-2zM10 3h1v1h-1zM5 4h2v1h-2zM8 4h2v1h-2zM4 5h1v1h-1zM6 5h2v1h-2zM9 5h2v1h-2zM5 6h1v1h-1zM7 6h2v1h-2zM10 6h1v1h-1zM7 10h1v1h-1z"/><path fill="#000000" d="M13 1h1v1h-1zM13 2h1v1h-1zM13 3h1v1h-1zM13 4h1v1h-1zM13 5h1v1h-1zM13 6h1v1h-1zM13 7h1v1h-1zM13 8h1v1h-1zM9 9h1v1h-1zM13 9h1v1h-1zM6 10h1v1h-1zM9 10h1v1h-1zM13 10h1v1h-1zM9 11h1v1h-1zM13 11h1v1h-1zM5 12h5v1h-5zM13 12h1v1h-1zM2 13h11v1h-11z"/><path fill="#ff0000" d="M12 2h1v1h-1z"/><path fill="#d4d4d4" d="M5 10h1v1h-1zM8 10h1v1h-1zM5 11h4v1h-4z"/></svg>
<svg class="i" style="left:89px;top:134px" width="15" height="14" viewBox="0 0 15 14" shape-rendering="crispEdges"><path fill="#a00000" d="M10 0h3v1h-3zM10 1h2v1h-2zM10 2h1v1h-1zM12 2h1v1h-1zM13 3h1v1h-1z"/><path fill="#000080" d="M0 4h11v1h-11zM0 5h11v1h-11z"/><path fill="#000000" d="M0 6h1v1h-1zM10 6h1v1h-1zM0 7h1v1h-1zM10 7h1v1h-1zM0 8h1v1h-1zM10 8h1v1h-1zM0 9h1v1h-1zM10 9h1v1h-1zM0 10h1v1h-1zM10 10h1v1h-1zM0 11h1v1h-1zM10 11h1v1h-1zM0 12h1v1h-1zM10 12h1v1h-1zM0 13h11v1h-11z"/><path fill="#ffffff" d="M1 6h9v1h-9zM1 7h1v1h-1zM9 7h1v1h-1zM1 8h9v1h-9zM1 9h1v1h-1zM9 9h1v1h-1zM1 10h9v1h-9zM1 11h1v1h-1zM9 11h1v1h-1zM1 12h9v1h-9z"/><path fill="#a0a0a0" d="M2 7h7v1h-7zM2 9h7v1h-7zM2 11h7v1h-7z"/></svg>
<div style="left:120px;top:135px;width:8px;height:12px;background:#c4c4c4;"></div>
<span class="t" style="left:114.5px;top:137px;font-size:12px;line-height:12px;color:#c0c0c0;">T</span>
<span class="t" style="left:120.5px;top:137px;font-size:12px;line-height:12px;color:#f2f2f2;">e</span>
<svg class="i" style="left:164px;top:133px" width="15" height="15" viewBox="0 0 15 15" shape-rendering="crispEdges"><path fill="#808000" d="M0 0h11v1h-11zM0 1h1v1h-1zM10 1h1v1h-1zM0 2h1v1h-1zM2 2h11v1h-11zM0 3h1v1h-1zM2 3h1v1h-1zM12 3h1v1h-1zM0 4h1v1h-1zM2 4h1v1h-1zM4 4h11v1h-11zM0 5h1v1h-1zM2 5h1v1h-1zM4 5h1v1h-1zM14 5h1v1h-1zM0 6h1v1h-1zM2 6h1v1h-1zM4 6h1v1h-1zM14 6h1v1h-1zM0 7h1v1h-1zM2 7h1v1h-1zM4 7h1v1h-1zM14 7h1v1h-1zM0 8h1v1h-1zM2 8h1v1h-1zM4 8h1v1h-1zM14 8h1v1h-1zM0 9h1v1h-1zM2 9h1v1h-1zM4 9h1v1h-1zM14 9h1v1h-1zM0 10h1v1h-1zM2 10h1v1h-1zM4 10h1v1h-1zM14 10h1v1h-1zM0 11h1v1h-1zM2 11h1v1h-1zM4 11h1v1h-1zM14 11h1v1h-1zM0 12h3v1h-3zM4 12h1v1h-1zM14 12h1v1h-1zM2 13h1v1h-1zM4 13h1v1h-1zM14 13h1v1h-1zM2 14h3v1h-3zM14 14h1v1h-1z"/><path fill="#ffffff" d="M1 1h9v1h-9zM1 2h1v1h-1zM1 3h1v1h-1zM3 3h9v1h-9zM1 4h1v1h-1zM3 4h1v1h-1zM1 5h1v1h-1zM3 5h1v1h-1zM5 5h9v1h-9zM1 6h1v1h-1zM3 6h1v1h-1zM5 6h2v1h-2zM12 6h2v1h-2zM1 7h1v1h-1zM3 7h1v1h-1zM5 7h1v1h-1zM13 7h1v1h-1zM1 8h1v1h-1zM3 8h1v1h-1zM1 9h1v1h-1zM3 9h1v1h-1zM1 10h1v1h-1zM3 10h1v1h-1zM1 11h1v1h-1zM3 11h1v1h-1zM3 12h1v1h-1zM3 13h1v1h-1zM5 13h1v1h-1zM13 13h1v1h-1zM5 14h2v1h-2zM12 14h2v1h-2z"/><path fill="#0000ff" d="M7 6h5v1h-5zM6 7h1v1h-1zM12 7h1v1h-1zM5 8h1v1h-1zM13 8h1v1h-1zM5 9h1v1h-1zM13 9h1v1h-1zM5 10h1v1h-1zM13 10h1v1h-1zM5 11h1v1h-1zM13 11h1v1h-1zM5 12h1v1h-1zM13 12h1v1h-1zM6 13h1v1h-1zM12 13h1v1h-1zM7 14h5v1h-5z"/><path fill="#ffff00" d="M7 7h2v1h-2zM10 7h2v1h-2zM6 8h3v1h-3zM10 8h3v1h-3zM6 9h3v1h-3zM10 9h3v1h-3zM6 10h3v1h-3zM12 10h1v1h-1zM6 11h7v1h-7zM6 12h7v1h-7zM7 13h5v1h-5z"/><path fill="#000080" d="M9 7h1v1h-1zM9 8h1v1h-1zM9 9h1v1h-1zM9 10h3v1h-3z"/></svg>
<div class="tree" style="left:5px;top:153px;width:180px;height:610px;background:#fff;border:1px solid #828790;"></div>
<svg class="i" style="left:14px;top:161px" width="9" height="9" viewBox="0 0 9 9" ><rect x="0.500" y="0.500" width="8" height="8" rx="1" fill="#f4f4f4" stroke="#919191"/><path d="M2 4.500H7" stroke="#3c50a0" stroke-width="1"/></svg>
<svg class="i" style="left:23px;top:165px" width="6" height="1" viewBox="0 0 6 1" shape-rendering="crispEdges"><path d="M1 0.500H6" stroke="#808080" stroke-dasharray="1 1"/></svg>
<svg class="i" style="left:34px;top:157px" width="9" height="14" viewBox="0 0 9 14" ><path d="M1 0.500L8.500 7L1 13.500Z" fill="#00e600"/><path d="M0.500 0V14" stroke="#003000" stroke-width="1"/></svg>
<span class="t" style="left:50.5px;top:159px;font-size:11px;line-height:11px;letter-spacing:-0.051px;">Design1</span>
<svg class="i" style="left:37px;top:172px" width="11" height="12" viewBox="0 0 11 12" shape-rendering="crispEdges"><path d="M0.500 1V11.500H11" fill="none" stroke="#808080" stroke-dasharray="1 1"/></svg>
<svg class="i" style="left:48px;top:174px" width="16" height="16" viewBox="0 0 16 16" shape-rendering="crispEdges"><path d="M0 0H11L16 5V16H0Z" fill="#fff"/><path fill="#000" d="M0 0h11v1h-11zM0 1h1v1h-1zM10 1h2v1h-2zM0 2h1v1h-1zM4 2h2v1h-2zM10 2h1v1h-1zM12 2h1v1h-1zM0 3h1v1h-1zM3 3h2v1h-2zM6 3h1v1h-1zM10 3h1v1h-1zM13 3h1v1h-1zM0 4h1v1h-1zM4 4h1v1h-1zM7 4h1v1h-1zM10 4h1v1h-1zM14 4h1v1h-1zM0 5h1v1h-1zM3 5h2v1h-2zM6 5h1v1h-1zM10 5h6v1h-6zM0 6h1v1h-1zM4 6h2v1h-2zM15 6h1v1h-1zM0 7h1v1h-1zM15 7h1v1h-1zM0 8h1v1h-1zM15 8h1v1h-1zM0 9h1v1h-1zM3 9h1v1h-1zM5 9h1v1h-1zM15 9h1v1h-1zM0 10h1v1h-1zM4 10h2v1h-2zM15 10h1v1h-1zM0 11h1v1h-1zM5 11h2v1h-2zM15 11h1v1h-1zM0 12h1v1h-1zM4 12h2v1h-2zM15 12h1v1h-1zM0 13h1v1h-1zM3 13h1v1h-1zM5 13h1v1h-1zM15 13h1v1h-1zM0 14h1v1h-1zM15 14h1v1h-1zM0 15h16v1h-16z"/><path fill="#ff0000" d="M1 3h2v1h-2zM8 4h2v1h-2zM2 5h1v1h-1zM8 5h1v1h-1zM2 6h1v1h-1zM8 6h1v1h-1zM2 7h1v1h-1zM8 7h1v1h-1zM2 8h1v1h-1zM8 8h1v1h-1zM1 9h2v1h-2zM8 9h1v1h-1zM8 10h1v1h-1zM7 11h2v1h-2zM2 13h1v1h-1zM2 14h1v1h-1z"/></svg>
<div class="tree-sel" style="left:67px;top:173px;width:46px;height:18px;background:#ececec;"></div>
<span class="t" style="left:69.5px;top:177px;font-size:11px;line-height:11px;letter-spacing:-0.051px;">Design1</span>
<div class="tab" style="left:5px;top:765px;width:59px;height:20px;background:#f0f0f0;border:1px solid;border-color:transparent #696969 #696969 #fff;border-radius:0 0 3px 3px;box-shadow:inset -1px -1px 0 #a0a0a0;"></div>
<div style="left:6px;top:764px;width:57px;height:3px;background:#f0f0f0;"></div>
<span class="t" style="left:10.5px;top:772px;font-size:11px;line-height:11px;letter-spacing:-0.175px;">Hierarchy</span>
<div class="tab" style="left:64px;top:765px;width:47px;height:18px;background:#f0f0f0;border:1px solid;border-color:#a0a0a0 #696969 #696969 #fff;border-radius:0 0 3px 3px;box-shadow:inset -1px -1px 0 #a0a0a0;"></div>
<span class="t" style="left:69px;top:769px;font-size:11px;line-height:11px;letter-spacing:-0.303px;">Visibility</span>
<div class="tab" style="left:113px;top:765px;width:70px;height:18px;background:#f0f0f0;border:1px solid;border-color:#a0a0a0 #696969 #696969 #fff;border-radius:0 0 3px 3px;box-shadow:inset -1px -1px 0 #a0a0a0;"></div>
<span class="t" style="left:117.3px;top:769px;font-size:11px;line-height:11px;letter-spacing:-0.161px;">Project View</span>
<div style="left:0px;top:789px;width:198px;height:1px;background:#a0a0a0;"></div>
<div class="splitter" style="left:192px;top:102px;width:5px;height:688px;background:#f8f8f8;"></div>
<!-- p_canvas -->
<div class="mdi" style="left:197px;top:101px;width:1057px;height:666px;border:1px solid #696969;box-shadow:inset 0 0 0 1px #fff;"></div>
<div class="canvasframe" style="left:202px;top:105px;width:1048px;height:656px;border:1px solid;border-color:#a0a0a0 #fff #fff #a0a0a0;"></div>
<div style="left:203px;top:106px;width:1046px;height:654px;border:1px solid;border-color:#696969 transparent transparent #696969;"></div>
<svg class="i" style="left:204px;top:107px" width="1028" height="636" viewBox="204 107 1028 636"><defs><pattern id="grid" x="208" y="124" width="18" height="18" patternUnits="userSpaceOnUse"><rect x="0" y="0" width="1" height="1" fill="#000"/></pattern></defs>
<rect x="204" y="107" width="1028" height="636" fill="#fff"/>
<rect x="208" y="124" width="1024" height="613" fill="url(#grid)"/>
<g fill="none" stroke="#ff0000" stroke-width="2" stroke-linecap="square" stroke-linejoin="miter" shape-rendering="crispEdges">
<path d="M353 412H622"/>
<path d="M604 412V286H622"/>
<path d="M731 286H856"/>
<path d="M946 286H1018V412"/>
<path d="M857 412H910V430"/>
<path d="M910 520H352"/>
<path d="M802 520V538H1018V520"/>
</g>
<g fill="none" stroke="#000" stroke-width="2" stroke-linecap="square" stroke-linejoin="round" shape-rendering="crispEdges">
<path d="M352 412V431M352 501V537"/>
<circle cx="352" cy="466" r="35" shape-rendering="geometricPrecision" stroke-width="1.900"/>
<path d="M323 496L379 438" stroke-linecap="butt" shape-rendering="geometricPrecision"/>
<path d="M346 448H359M352 442V455M346 486H359" stroke-linecap="butt"/>
<path d="M335 538H370M341 544H364M347 550H358" stroke-linecap="butt"/>
<path d="M622 286V322H670M670 304V340M682 304V340M682 322H730V286"/>
<path d="M622 412V376H659M693 376H730V412"/>
<circle cx="676" cy="376" r="17" shape-rendering="geometricPrecision" stroke-width="1.900"/>
<path d="M857 286H875L880 277L888.500 294L898 277L906.500 294L916 277L924.500 294L929 286H945" stroke-linecap="butt" shape-rendering="geometricPrecision" stroke-width="1.900"/>
<path d="M910 431V448L919.500 454.500L903.500 462.500L919.500 472.500L903.500 480.500L919.500 490.500L903.500 498.500L910 502V519" stroke-linecap="butt" shape-rendering="geometricPrecision" stroke-width="1.900"/>
<path d="M1018 413V519"/>
<path d="M1002 480H1033" stroke-linecap="butt"/>
<path d="M1042.500 448.500L1054 460M1036.500 472.500L1048 484" stroke-linecap="butt" shape-rendering="geometricPrecision"/>
<path d="M1060.500 455L1049 466.500L1066.500 472ZM1054.500 479L1043 490.500L1060.500 496Z" fill="#fff" stroke-linejoin="miter" shape-rendering="geometricPrecision" stroke-width="1.800"/>
</g>
<path d="M1002 453H1035L1018.500 480Z" fill="#000" shape-rendering="crispEdges"/>
<path d="M383.5 433.5L369.5 442.5L377 449.500Z" fill="#000" shape-rendering="crispEdges"/>
<g fill="none" stroke="#0000ff" stroke-width="2">
<path d="M730 412H755M831 412H857"/>
<circle cx="760" cy="412" r="4.800" fill="#fff" stroke-width="1.800"/><circle cx="826" cy="412" r="4.800" fill="#fff" stroke-width="1.800"/>
<path d="M765 410.500L821 376.500"/>
</g>
<path transform="translate(604 412)" d="M-3 -4H3V-2H4V2H3V4H-3V2H-4V-2H-3Z" fill="#ff0000" shape-rendering="crispEdges"/>
<path transform="translate(352 520)" d="M-3 -4H3V-2H4V2H3V4H-3V2H-4V-2H-3Z" fill="#ff0000" shape-rendering="crispEdges"/>
<path transform="translate(802 520)" d="M-3 -4H3V-2H4V2H3V4H-3V2H-4V-2H-3Z" fill="#ff0000" shape-rendering="crispEdges"/>
<path d="M496.500 387V405M676.500 528V552M1027 322.500H1076" stroke="#d8d8d8" stroke-width="1" fill="none"/>
<path d="M505.5 412L488 403.500L492.5 412L488 420.500Z" fill="#00dc00"/>
<path d="M667.5 520L685 511.500L680.5 520L685 528.500Z" fill="#00dc00"/>
<path d="M1018 331.5L1009.500 314L1018 318.5L1026.500 314Z" fill="#00dc00"/>
<g font-family="'Liberation Sans',sans-serif" style="font-kerning:none">
<text x="391.5" y="400" font-size="26" font-weight="bold" >V1</text>
<text x="391" y="466" font-size="26" font-weight="bold" textLength="99.5" lengthAdjust="spacing" >Key = A</text>
<text x="394" y="490" font-size="26" font-weight="bold" >15V</text>
<text x="607" y="274" font-size="26" font-weight="bold" textLength="154.1" lengthAdjust="spacing" >1mH 0.001Ω</text>
<text x="698" y="346" font-size="26" font-weight="bold" >K1</text>
<text x="883" y="264" font-size="26" font-weight="bold" textLength="34.2" lengthAdjust="spacing" >R2</text>
<text x="863" y="326" font-size="26" font-weight="bold" textLength="65.3" lengthAdjust="spacing" >600Ω</text>
<text x="775.5" y="364" font-size="26" font-weight="bold" fill="#0000ff" >S1</text>
<text x="708" y="477" font-size="26" font-weight="bold" fill="#0000ff" textLength="159.2" lengthAdjust="spacing" >Key = Space</text>
<text x="923.5" y="454" font-size="26" font-weight="bold" >R1</text>
<text x="925" y="490" font-size="26" font-weight="bold" >1Ω</text>
<text x="1069" y="400" font-size="26" font-weight="bold" >U1</text>
<text transform="translate(683.200 376) rotate(-90)" font-size="24" text-anchor="middle">K</text>
<text x="487.4" y="441.7" font-size="21.5" textLength="68.6" lengthAdjust="spacingAndGlyphs" >Probe3</text>
<text x="667.3" y="550.2" font-size="21.5" textLength="68.6" lengthAdjust="spacingAndGlyphs" >Probe2</text>
<text x="1025.3" y="336.5" font-size="21.5" textLength="68.6" lengthAdjust="spacingAndGlyphs" >Probe1</text>
<g class="probebox"><rect x="464.8" y="263" width="95.200" height="125" rx="3" fill="#f1f1f9"/><rect x="465.8" y="264" width="93.200" height="123" rx="2.500" fill="#ffffb3"/><text x="470.6" y="278" font-size="11" fill="#141414" textLength="43.8" lengthAdjust="spacingAndGlyphs" >V: 15.0 V</text><text x="470.6" y="291" font-size="11" fill="#141414" textLength="51.8" lengthAdjust="spacingAndGlyphs" >V(p-p): 0 V</text><text x="470.6" y="304" font-size="11" fill="#141414" textLength="52.8" lengthAdjust="spacingAndGlyphs" >V(rms): 0 V</text><text x="470.6" y="317" font-size="11" fill="#141414" textLength="62.3" lengthAdjust="spacingAndGlyphs" >V(dc): 15.0 V</text><text x="470.6" y="330" font-size="11" fill="#141414" textLength="44.8" lengthAdjust="spacingAndGlyphs" >I: 150 nA</text><text x="470.6" y="343" font-size="11" fill="#141414" textLength="51.3" lengthAdjust="spacingAndGlyphs" >I(p-p): 0 A</text><text x="470.6" y="356" font-size="11" fill="#141414" textLength="52" lengthAdjust="spacingAndGlyphs" >I(rms): 0 A</text><text x="470.6" y="369" font-size="11" fill="#141414" textLength="63.7" lengthAdjust="spacingAndGlyphs" >I(dc): 150 nA</text><text x="470.6" y="382" font-size="11" fill="#141414" textLength="29.5" lengthAdjust="spacingAndGlyphs" >Freq.:</text></g>
<g class="probebox"><rect x="656.8" y="551" width="95.200" height="125" rx="3" fill="#f1f1f9"/><rect x="657.8" y="552" width="93.200" height="123" rx="2.500" fill="#ffffb3"/><text x="662.6" y="566" font-size="11" fill="#141414" textLength="28.2" lengthAdjust="spacingAndGlyphs" >V: 0 V</text><text x="662.6" y="579" font-size="11" fill="#141414" textLength="51.8" lengthAdjust="spacingAndGlyphs" >V(p-p): 0 V</text><text x="662.6" y="592" font-size="11" fill="#141414" textLength="52.8" lengthAdjust="spacingAndGlyphs" >V(rms): 0 V</text><text x="662.6" y="605" font-size="11" fill="#141414" textLength="47" lengthAdjust="spacingAndGlyphs" >V(dc): 0 V</text><text x="662.6" y="618" font-size="11" fill="#141414" textLength="44.8" lengthAdjust="spacingAndGlyphs" >I: 150 nA</text><text x="662.6" y="631" font-size="11" fill="#141414" textLength="51.3" lengthAdjust="spacingAndGlyphs" >I(p-p): 0 A</text><text x="662.6" y="644" font-size="11" fill="#141414" textLength="52" lengthAdjust="spacingAndGlyphs" >I(rms): 0 A</text><text x="662.6" y="657" font-size="11" fill="#141414" textLength="63.7" lengthAdjust="spacingAndGlyphs" >I(dc): 150 nA</text><text x="662.6" y="670" font-size="11" fill="#141414" textLength="29.5" lengthAdjust="spacingAndGlyphs" >Freq.:</text></g>
<g class="probebox"><rect x="1074.8" y="214" width="95.200" height="125" rx="3" fill="#f1f1f9"/><rect x="1075.8" y="215" width="93.200" height="123" rx="2.500" fill="#ffffb3"/><text x="1080.6" y="229" font-size="11" fill="#141414" textLength="28.2" lengthAdjust="spacingAndGlyphs" >V: 0 V</text><text x="1080.6" y="242" font-size="11" fill="#141414" textLength="51.8" lengthAdjust="spacingAndGlyphs" >V(p-p): 0 V</text><text x="1080.6" y="255" font-size="11" fill="#141414" textLength="52.8" lengthAdjust="spacingAndGlyphs" >V(rms): 0 V</text><text x="1080.6" y="268" font-size="11" fill="#141414" textLength="47" lengthAdjust="spacingAndGlyphs" >V(dc): 0 V</text><text x="1080.6" y="281" font-size="11" fill="#141414" textLength="26.5" lengthAdjust="spacingAndGlyphs" >I: 0 A</text><text x="1080.6" y="294" font-size="11" fill="#141414" textLength="51.3" lengthAdjust="spacingAndGlyphs" >I(p-p): 0 A</text><text x="1080.6" y="307" font-size="11" fill="#141414" textLength="52" lengthAdjust="spacingAndGlyphs" >I(rms): 0 A</text><text x="1080.6" y="320" font-size="11" fill="#141414" textLength="45.8" lengthAdjust="spacingAndGlyphs" >I(dc): 0 A</text><text x="1080.6" y="333" font-size="11" fill="#141414" textLength="29.5" lengthAdjust="spacingAndGlyphs" >Freq.:</text></g>
</g></svg>
<div class="vscroll" style="left:1232px;top:107px;width:17px;height:636px;background:linear-gradient(90deg,#e4e4e4 0,#eeeeee 25%,#efefef 75%,#e4e4e4 100%);"></div>
<svg class="i" style="left:1237px;top:114px" width="7" height="4" viewBox="0 0 7 4" ><defs><linearGradient id="agv" x1="0" y1="0" x2="0" y2="1"><stop offset="0" stop-color="#8c8c8c"/><stop offset="1" stop-color="#262626"/></linearGradient><linearGradient id="agd" x1="0" y1="0" x2="0" y2="1"><stop offset="0" stop-color="#262626"/><stop offset="1" stop-color="#8c8c8c"/></linearGradient><linearGradient id="agl" x1="0" y1="0" x2="1" y2="0"><stop offset="0" stop-color="#8c8c8c"/><stop offset="1" stop-color="#262626"/></linearGradient><linearGradient id="agr" x1="0" y1="0" x2="1" y2="0"><stop offset="0" stop-color="#262626"/><stop offset="1" stop-color="#8c8c8c"/></linearGradient></defs><path d="M0 4H7L3.500 0Z" fill="url(#agv)"/></svg>
<svg class="i" style="left:1237px;top:732px" width="7" height="4" viewBox="0 0 7 4" ><path d="M0 0H7L3.500 4Z" fill="url(#agd)"/></svg>
<div class="vthumb" style="left:1232px;top:208px;width:15px;height:262px;border:1px solid #979797;border-radius:2px;background:linear-gradient(90deg,#f5f5f5 0,#e9e9eb 48%,#d4d4d8 52%,#c6c6ca 100%);box-shadow:inset 0 0 0 1px rgba(255,255,255,.6);"></div>
<svg class="i" style="left:1235px;top:335px" width="9" height="8" viewBox="0 0 9 8" ><path d="M0 0.500H8M0 2.500H8M0 4.500H8M0 6.500H8" stroke="#606060" stroke-width="1"/></svg>
<div class="hscroll" style="left:204px;top:743px;width:1028px;height:17px;background:linear-gradient(180deg,#e4e4e4 0,#eeeeee 25%,#efefef 75%,#e4e4e4 100%);"></div>
<div style="left:1232px;top:743px;width:17px;height:17px;background:#f0f0f0;border-right:1px solid #e4e4e4;border-bottom:1px solid #e4e4e4;"></div>
<svg class="i" style="left:210px;top:747px" width="4" height="7" viewBox="0 0 4 7" ><path d="M4 0V7L0 3.500Z" fill="url(#agl)"/></svg>
<svg class="i" style="left:1221px;top:747px" width="4" height="7" viewBox="0 0 4 7" ><path d="M0 0V7L4 3.500Z" fill="url(#agr)"/></svg>
<div class="hthumb" style="left:285px;top:743px;width:529px;height:15px;border:1px solid #979797;border-radius:2px;background:linear-gradient(180deg,#f5f5f5 0,#e9e9eb 48%,#d4d4d8 52%,#c6c6ca 100%);box-shadow:inset 0 0 0 1px rgba(255,255,255,.6);"></div>
<svg class="i" style="left:545px;top:746px" width="8" height="9" viewBox="0 0 8 9" ><path d="M0.500 0V8M2.500 0V8M4.500 0V8M6.500 0V8" stroke="#606060" stroke-width="1"/></svg>
<div style="left:197px;top:767px;width:1px;height:23px;background:#696969;"></div>
<div class="doctab" style="left:201px;top:766px;width:79px;height:24px;background:#f0f0f0;border:1px solid;border-color:transparent #101010 #101010 #fff;border-radius:0 0 4px 4px;box-shadow:1px 1px 0 rgba(0,0,0,.45);"></div>
<div style="left:202px;top:765px;width:76px;height:3px;background:#f0f0f0;"></div>
<svg class="i" style="left:205px;top:770px" width="16" height="16" viewBox="0 0 16 16" shape-rendering="crispEdges"><path d="M0 0H11L16 5V16H0Z" fill="#fff"/><path fill="#000" d="M0 0h11v1h-11zM0 1h1v1h-1zM10 1h2v1h-2zM0 2h1v1h-1zM4 2h2v1h-2zM10 2h1v1h-1zM12 2h1v1h-1zM0 3h1v1h-1zM3 3h2v1h-2zM6 3h1v1h-1zM10 3h1v1h-1zM13 3h1v1h-1zM0 4h1v1h-1zM4 4h1v1h-1zM7 4h1v1h-1zM10 4h1v1h-1zM14 4h1v1h-1zM0 5h1v1h-1zM3 5h2v1h-2zM6 5h1v1h-1zM10 5h6v1h-6zM0 6h1v1h-1zM4 6h2v1h-2zM15 6h1v1h-1zM0 7h1v1h-1zM15 7h1v1h-1zM0 8h1v1h-1zM15 8h1v1h-1zM0 9h1v1h-1zM3 9h1v1h-1zM5 9h1v1h-1zM15 9h1v1h-1zM0 10h1v1h-1zM4 10h2v1h-2zM15 10h1v1h-1zM0 11h1v1h-1zM5 11h2v1h-2zM15 11h1v1h-1zM0 12h1v1h-1zM4 12h2v1h-2zM15 12h1v1h-1zM0 13h1v1h-1zM3 13h1v1h-1zM5 13h1v1h-1zM15 13h1v1h-1zM0 14h1v1h-1zM15 14h1v1h-1zM0 15h16v1h-16z"/><path fill="#ff0000" d="M1 3h2v1h-2zM8 4h2v1h-2zM2 5h1v1h-1zM8 5h1v1h-1zM2 6h1v1h-1zM8 6h1v1h-1zM2 7h1v1h-1zM8 7h1v1h-1zM2 8h1v1h-1zM8 8h1v1h-1zM1 9h2v1h-2zM8 9h1v1h-1zM8 10h1v1h-1zM7 11h2v1h-2zM2 13h1v1h-1zM2 14h1v1h-1z"/></svg>
<span class="t" style="left:225.5px;top:772px;font-size:12px;line-height:12px;letter-spacing:-0.281px;">Design1 *</span>
<div class="btn3d" style="left:1236px;top:772px;width:16px;height:15px;background:#f0f0f0;border:1px solid;border-color:#fff #696969 #696969 #fff;"></div>
<svg class="i" style="left:1239px;top:774px" width="11" height="11" viewBox="0 0 11 11" ><rect x="1" y="2" width="5.500" height="4.500" fill="#fff" stroke="#0000c0" stroke-width="1.400"/><rect x="4" y="5" width="5.500" height="4.500" fill="#fff" stroke="#0000c0" stroke-width="1.400"/><path d="M7.500 2.500L10 0.500M9 0H10.500V1.500" stroke="#0000c0" fill="none"/></svg>
<!-- p_right -->
<div class="insttb" style="left:1254px;top:102px;width:26px;height:536px;border-left:1px solid #fff;border-top:1px solid #fff;border-bottom:1px solid #a0a0a0;"></div>
<div style="left:1279px;top:102px;width:1px;height:536px;background:#808080;"></div>
<svg class="i" style="left:1254px;top:110px" width="26" height="390" viewBox="1254 110 26 390"><g shape-rendering="crispEdges"><rect x="1263" y="119" width="8" height="4" fill="#a0a0a0"/><rect x="1258" y="138" width="1" height="1" fill="#a0a0a0"/><rect x="1259" y="139" width="15" height="6" fill="#a0a0a0"/><rect x="1262" y="147" width="2" height="1" fill="#a0a0a0"/><rect x="1265" y="147" width="2" height="1" fill="#a0a0a0"/><rect x="1268" y="147" width="2" height="1" fill="#a0a0a0"/><rect x="1261" y="150" width="3" height="1" fill="#a0a0a0"/><rect x="1262" y="149" width="1" height="3" fill="#a0a0a0"/><rect x="1265" y="150" width="3" height="1" fill="#a0a0a0"/><rect x="1266" y="149" width="1" height="3" fill="#a0a0a0"/><rect x="1269" y="150" width="3" height="1" fill="#a0a0a0"/><rect x="1270" y="149" width="1" height="3" fill="#a0a0a0"/><rect x="1258" y="159" width="1" height="1" fill="#a0a0a0"/><rect x="1260" y="171" width="3" height="1" fill="#a0a0a0"/><rect x="1261" y="170" width="1" height="3" fill="#a0a0a0"/><rect x="1263" y="171" width="3" height="1" fill="#a0a0a0"/><rect x="1264" y="170" width="1" height="3" fill="#a0a0a0"/><rect x="1267" y="171" width="3" height="1" fill="#a0a0a0"/><rect x="1268" y="170" width="1" height="3" fill="#a0a0a0"/><rect x="1270" y="171" width="3" height="1" fill="#a0a0a0"/><rect x="1271" y="170" width="1" height="3" fill="#a0a0a0"/><rect x="1258" y="180" width="1" height="1" fill="#a0a0a0"/><rect x="1259" y="181" width="11" height="7" fill="#a0a0a0"/><path d="M1259 188 L1261.500 184.5 L1264 188 L1266.500 184.5 L1269.500 188 V188 H1259Z" fill="#f0f0f0"/><path d="M1260 181.5 L1262 183.5 L1264 181.5 L1266 183.5 L1268 181.5" fill="none" stroke="#f0f0f0" stroke-width="1" shape-rendering="auto"/><rect x="1271" y="182" width="1" height="1" fill="#a0a0a0"/><rect x="1272" y="184" width="1" height="1" fill="#a0a0a0"/><rect x="1271" y="186" width="1" height="1" fill="#a0a0a0"/><rect x="1260" y="192" width="3" height="1" fill="#a0a0a0"/><rect x="1261" y="191" width="1" height="3" fill="#a0a0a0"/><rect x="1263" y="192" width="3" height="1" fill="#a0a0a0"/><rect x="1264" y="191" width="1" height="3" fill="#a0a0a0"/><rect x="1258" y="202" width="1" height="1" fill="#a0a0a0"/><rect x="1259" y="203" width="11" height="7" fill="#a0a0a0"/><path d="M1259 210 L1261.500 206.5 L1264 210 L1266.500 206.5 L1269.500 210 V210 H1259Z" fill="#f0f0f0"/><path d="M1260 203.5 L1262 205.5 L1264 203.5 L1266 205.5 L1268 203.5" fill="none" stroke="#f0f0f0" stroke-width="1" shape-rendering="auto"/><rect x="1271" y="204" width="1" height="1" fill="#a0a0a0"/><rect x="1272" y="206" width="1" height="1" fill="#a0a0a0"/><rect x="1271" y="208" width="1" height="1" fill="#a0a0a0"/><rect x="1260" y="214" width="3" height="1" fill="#a0a0a0"/><rect x="1261" y="213" width="1" height="3" fill="#a0a0a0"/><rect x="1263" y="214" width="3" height="1" fill="#a0a0a0"/><rect x="1264" y="213" width="1" height="3" fill="#a0a0a0"/><rect x="1266" y="214" width="3" height="1" fill="#a0a0a0"/><rect x="1267" y="213" width="1" height="3" fill="#a0a0a0"/><rect x="1269" y="214" width="3" height="1" fill="#a0a0a0"/><rect x="1270" y="213" width="1" height="3" fill="#a0a0a0"/><rect x="1258" y="222" width="1" height="1" fill="#a0a0a0"/><rect x="1259" y="223" width="11" height="8" fill="#a0a0a0"/><rect x="1271" y="225" width="1" height="1" fill="#a0a0a0"/><rect x="1272" y="225" width="1" height="1" fill="#a0a0a0"/><rect x="1271" y="227" width="1" height="1" fill="#a0a0a0"/><rect x="1272" y="227" width="1" height="1" fill="#a0a0a0"/><rect x="1271" y="229" width="1" height="1" fill="#a0a0a0"/><rect x="1272" y="229" width="1" height="1" fill="#a0a0a0"/><rect x="1260" y="234" width="3" height="1" fill="#a0a0a0"/><rect x="1261" y="233" width="1" height="3" fill="#a0a0a0"/><rect x="1263" y="234" width="3" height="1" fill="#a0a0a0"/><rect x="1264" y="233" width="1" height="3" fill="#a0a0a0"/><rect x="1266" y="234" width="3" height="1" fill="#a0a0a0"/><rect x="1267" y="233" width="1" height="3" fill="#a0a0a0"/><rect x="1269" y="234" width="3" height="1" fill="#a0a0a0"/><rect x="1270" y="233" width="1" height="3" fill="#a0a0a0"/><rect x="1258" y="243" width="1" height="1" fill="#a0a0a0"/><rect x="1259" y="244" width="15" height="7" fill="#a0a0a0"/><rect x="1262" y="254" width="1" height="1" fill="#a0a0a0"/><rect x="1265" y="254" width="1" height="1" fill="#a0a0a0"/><rect x="1267" y="254" width="1" height="1" fill="#a0a0a0"/><rect x="1269" y="254" width="3" height="1" fill="#a0a0a0"/><rect x="1270" y="253" width="1" height="3" fill="#a0a0a0"/><rect x="1258" y="265" width="1" height="1" fill="#a0a0a0"/><rect x="1260" y="266" width="14" height="6" fill="#a0a0a0"/><rect x="1261" y="273" width="1" height="1" fill="#a0a0a0"/><rect x="1264" y="273" width="1" height="1" fill="#a0a0a0"/><rect x="1267" y="273" width="1" height="1" fill="#a0a0a0"/><rect x="1270" y="273" width="1" height="1" fill="#a0a0a0"/><rect x="1260" y="277" width="1" height="1" fill="#a0a0a0"/><rect x="1262" y="277" width="1" height="1" fill="#a0a0a0"/><rect x="1264" y="277" width="1" height="1" fill="#a0a0a0"/><rect x="1266" y="277" width="1" height="1" fill="#a0a0a0"/><rect x="1268" y="277" width="1" height="1" fill="#a0a0a0"/><rect x="1270" y="277" width="1" height="1" fill="#a0a0a0"/><rect x="1272" y="277" width="1" height="1" fill="#a0a0a0"/><rect x="1258" y="285" width="1" height="1" fill="#a0a0a0"/><rect x="1259" y="286" width="15" height="8" fill="#a0a0a0"/><rect x="1263" y="295" width="1" height="1" fill="#a0a0a0"/><rect x="1266" y="295" width="1" height="1" fill="#a0a0a0"/><rect x="1269" y="295" width="1" height="1" fill="#a0a0a0"/><rect x="1260" y="298" width="1" height="1" fill="#a0a0a0"/><rect x="1262" y="298" width="1" height="1" fill="#a0a0a0"/><rect x="1264" y="298" width="1" height="1" fill="#a0a0a0"/><rect x="1266" y="298" width="1" height="1" fill="#a0a0a0"/><rect x="1268" y="298" width="1" height="1" fill="#a0a0a0"/><rect x="1270" y="298" width="1" height="1" fill="#a0a0a0"/><rect x="1272" y="298" width="1" height="1" fill="#a0a0a0"/><rect x="1258" y="306" width="1" height="1" fill="#a0a0a0"/><rect x="1261" y="307" width="13" height="14" fill="#a0a0a0"/><rect x="1259" y="309" width="1" height="1" fill="#a0a0a0"/><rect x="1259" y="311" width="1" height="1" fill="#a0a0a0"/><rect x="1259" y="313" width="1" height="1" fill="#a0a0a0"/><rect x="1259" y="315" width="1" height="1" fill="#a0a0a0"/><rect x="1259" y="317" width="1" height="1" fill="#a0a0a0"/><rect x="1259" y="319" width="1" height="1" fill="#a0a0a0"/><rect x="1260" y="319" width="1" height="1" fill="#a0a0a0"/><rect x="1258" y="327" width="1" height="1" fill="#a0a0a0"/><rect x="1259" y="328" width="11" height="8" fill="#a0a0a0"/><rect x="1271" y="330" width="1" height="1" fill="#a0a0a0"/><rect x="1272" y="330" width="1" height="1" fill="#a0a0a0"/><rect x="1271" y="332" width="1" height="1" fill="#a0a0a0"/><rect x="1272" y="332" width="1" height="1" fill="#a0a0a0"/><rect x="1262" y="339" width="3" height="1" fill="#a0a0a0"/><rect x="1263" y="338" width="1" height="3" fill="#a0a0a0"/><rect x="1265" y="339" width="3" height="1" fill="#a0a0a0"/><rect x="1266" y="338" width="1" height="3" fill="#a0a0a0"/><rect x="1268" y="339" width="3" height="1" fill="#a0a0a0"/><rect x="1269" y="338" width="1" height="3" fill="#a0a0a0"/><rect x="1258" y="348" width="1" height="1" fill="#a0a0a0"/><rect x="1259" y="349" width="15" height="7" fill="#a0a0a0"/><rect x="1262" y="357" width="1" height="1" fill="#a0a0a0"/><rect x="1265" y="357" width="1" height="1" fill="#a0a0a0"/><rect x="1268" y="357" width="1" height="1" fill="#a0a0a0"/><rect x="1258" y="369" width="1" height="1" fill="#a0a0a0"/><rect x="1259" y="370" width="15" height="7" fill="#a0a0a0"/><rect x="1261" y="378" width="1" height="1" fill="#a0a0a0"/><rect x="1264" y="378" width="1" height="1" fill="#a0a0a0"/><rect x="1258" y="390" width="1" height="1" fill="#a0a0a0"/><rect x="1259" y="391" width="10" height="8" fill="#a0a0a0"/><rect x="1271" y="392" width="1" height="1" fill="#a0a0a0"/><rect x="1272" y="392" width="1" height="1" fill="#a0a0a0"/><rect x="1271" y="394" width="1" height="1" fill="#a0a0a0"/><rect x="1272" y="394" width="1" height="1" fill="#a0a0a0"/><rect x="1271" y="396" width="1" height="1" fill="#a0a0a0"/><rect x="1272" y="396" width="1" height="1" fill="#a0a0a0"/><rect x="1271" y="398" width="1" height="1" fill="#a0a0a0"/><rect x="1272" y="398" width="1" height="1" fill="#a0a0a0"/><rect x="1258" y="411" width="1" height="1" fill="#a0a0a0"/><rect x="1259" y="412" width="15" height="6" fill="#a0a0a0"/><rect x="1261" y="421" width="3" height="1" fill="#a0a0a0"/><rect x="1262" y="420" width="1" height="3" fill="#a0a0a0"/><rect x="1258" y="432" width="1" height="1" fill="#a0a0a0"/><rect x="1270" y="435" width="1" height="1" fill="#a0a0a0"/><rect x="1271" y="435" width="1" height="1" fill="#a0a0a0"/><rect x="1272" y="435" width="1" height="1" fill="#a0a0a0"/><rect x="1270" y="437" width="1" height="1" fill="#a0a0a0"/><rect x="1271" y="437" width="1" height="1" fill="#a0a0a0"/><rect x="1272" y="437" width="1" height="1" fill="#a0a0a0"/><rect x="1261" y="442" width="1" height="1" fill="#a0a0a0"/><rect x="1261" y="444" width="1" height="1" fill="#a0a0a0"/><rect x="1258" y="453" width="1" height="1" fill="#a0a0a0"/><rect x="1259" y="454" width="11" height="8" fill="#d4d4d4"/><rect x="1271" y="455" width="1" height="1" fill="#a0a0a0"/><rect x="1272" y="457" width="1" height="1" fill="#a0a0a0"/><rect x="1271" y="459" width="1" height="1" fill="#a0a0a0"/><rect x="1272" y="461" width="1" height="1" fill="#a0a0a0"/><rect x="1258" y="474" width="1" height="1" fill="#a0a0a0"/><rect x="1259" y="475" width="11" height="8" fill="#d4d4d4"/><rect x="1271" y="476" width="1" height="1" fill="#a0a0a0"/><rect x="1272" y="478" width="1" height="1" fill="#a0a0a0"/><rect x="1271" y="480" width="1" height="1" fill="#a0a0a0"/><rect x="1272" y="482" width="1" height="1" fill="#a0a0a0"/><path d="M1262.5 118V129M1271.5 118V129M1262 118.5H1272M1259.5 120V128M1260.5 121V129M1274.5 120V128M1273.5 121V129M1260 129.5H1274M1261 130.5H1273M1273.5 139V153M1259 152.5H1274M1260 160.5H1265M1260 165.5H1265M1260.5 160V166M1264.5 160V166M1268 160.5H1274M1268 165.5H1274M1268.5 160V166M1273.5 160V174M1259 173.5H1274M1273.5 181V195M1259 189.5H1274M1259 194.5H1274M1273.5 203V217M1259 211.5H1274M1259 216.5H1274M1273.5 223V237M1259 236.5H1274M1259 231.5H1274M1273.5 244V258M1259 257.5H1274M1273.5 266V279M1259 278.5H1274M1273.5 286V300M1259 299.5H1274M1273.5 328V342M1259 341.5H1274M1259 336.5H1274M1273.5 349V363M1259 362.5H1274M1273.5 370V384M1259 383.5H1274M1273.5 391V405M1259 404.5H1274M1273.5 412V426M1259 425.5H1274M1259 433.5H1269M1259 439.5H1269M1259.5 433V440M1268.5 433V440M1273.5 433V447M1259 446.5H1274M1259 454.5H1274M1259.5 454V463M1273.5 454V468M1259 462.5H1274M1259 467.5H1274M1260 464.5H1265M1260 466.5H1265M1261.5 463V467M1263.5 463V467M1259 475.5H1274M1259.5 475V484M1273.5 475V489M1259 483.5H1274M1259 488.5H1274M1260 485.5H1265M1260 487.5H1265M1261.5 484V488M1263.5 484V488" fill="none" stroke="#a0a0a0" stroke-width="1"/></g><path d="M1264.500 126a2 2 0 1 0 4 0a2 2 0 1 0 -4 0M1265.500 125L1267.500 127M1261.500 164L1263.500 162M1270 162L1272 164M1270.500 358.500L1272.500 360.500L1270.500 362L1268.500 360.500ZM1268 379.500L1269.500 381L1268 382.500L1266.500 381ZM1271.500 379.500L1273 381L1271.500 382.500L1270 381ZM1268 400.500L1269.500 402L1268 403.500L1266.500 402ZM1271.500 400.500L1273 402L1271.500 403.500L1270 402ZM1260 439L1268 433M1259 461 L1262 455 L1265 461 L1268 455 L1270 459 M1259 455 L1262 461 L1265 455 L1268 461 L1270 457M1259 482 L1262 476 L1265 482 L1268 476 L1270 480 M1259 476 L1262 482 L1265 476 L1268 482 L1270 478" fill="none" stroke="#a0a0a0" stroke-width="1"/></svg>
<span class="t" style="left:1265.5px;top:419px;font-size:6.5px;line-height:6.5px;color:#8c8c8c;font-weight:bold;letter-spacing:-1.375px;">AG</span>
<span class="t" style="left:1265.5px;top:440px;font-size:6.5px;line-height:6.5px;color:#8c8c8c;font-weight:bold;letter-spacing:-1.375px;">AG</span>
<span class="t" style="left:1265.5px;top:461px;font-size:6.5px;line-height:6.5px;color:#8c8c8c;font-weight:bold;letter-spacing:-1.375px;">AG</span>
<span class="t" style="left:1265.5px;top:482px;font-size:6.5px;line-height:6.5px;color:#8c8c8c;font-weight:bold;letter-spacing:-0.836px;">TK</span>
<div style="left:1255px;top:495px;width:22px;height:1px;background:#a0a0a0;"></div>
<div style="left:1255px;top:496px;width:22px;height:1px;background:#fcfcfc;"></div>
<div style="left:1255px;top:569px;width:22px;height:1px;background:#a0a0a0;"></div>
<div style="left:1255px;top:570px;width:22px;height:1px;background:#fcfcfc;"></div>
<div style="left:1255px;top:610px;width:22px;height:1px;background:#a0a0a0;"></div>
<div style="left:1255px;top:611px;width:22px;height:1px;background:#fcfcfc;"></div>
<svg class="i" style="left:1257px;top:502px" width="18" height="15" viewBox="0 0 18 15" ><path d="M1.500 1.500H6.500L5 3L9 7H5L3 5L1.500 6.500Z" fill="#ffee00" stroke="#8c8c50" stroke-width="1"/><rect x="1.500" y="7.500" width="15" height="7" rx="2.500" fill="#ffee00" stroke="#8c8c50"/></svg>
<span class="t" style="left:1260px;top:509px;font-size:8px;line-height:8px;font-weight:bold;letter-spacing:-0.77px;">1.4v</span>
<svg class="i" style="left:1264px;top:523px" width="4" height="6" viewBox="0 0 4 6" ><path d="M0 0L3.500 3L0 6Z" fill="#000"/></svg>
<svg class="i" style="left:1257px;top:535px" width="18" height="17" viewBox="0 0 18 17" shape-rendering="crispEdges"><rect x="2" y="1" width="15" height="15" fill="#a0a0a0"/><path d="M2.500 0.500H17M2.500 16.500H17" stroke="#a0a0a0" stroke-dasharray="1 1"/><path d="M0.500 6.500H2M0.500 10.500H2M17 6.500H18" stroke="#a0a0a0"/></svg>
<svg class="i" style="left:1264px;top:556px" width="4" height="6" viewBox="0 0 4 6" ><path d="M0 0L3.500 3L0 6Z" fill="#a0a0a0"/></svg>
<svg class="i" style="left:1257px;top:579px" width="18" height="13" viewBox="0 0 18 13" ><path d="M1.500 5.500L10 1.500L16.500 5.500L8 11.500Z" fill="none" stroke="#a0a0a0" stroke-dasharray="1.500 1"/><path d="M4 4.500L7.500 9H12" fill="none" stroke="#a0a0a0" stroke-width="1.800"/></svg>
<svg class="i" style="left:1264px;top:597px" width="4" height="6" viewBox="0 0 4 6" ><path d="M0 0L3.500 3L0 6Z" fill="#a0a0a0"/></svg>
<svg class="i" style="left:1257px;top:617px" width="18" height="17" viewBox="0 0 18 17" ><circle cx="4.500" cy="11.500" r="3" fill="none" stroke="#a0a0a0" stroke-width="2"/><path d="M7 9.500L11 3.500" stroke="#a0a0a0" stroke-width="2.200" fill="none"/><path d="M11 3L12.500 2L13.500 3.500L15 2.500L16.500 3.500" stroke="#a0a0a0" fill="none"/><path d="M8 12.500H17" stroke="#a0a0a0"/></svg>
<!-- p_bottom -->
<div style="left:1254px;top:789px;width:26px;height:1px;background:#a0a0a0;"></div>
<div style="left:0px;top:790px;width:198px;height:1px;background:#fff;"></div>
<div style="left:0px;top:794px;width:1280px;height:1px;background:#6e6e6e;"></div>
<div style="left:0px;top:795px;width:1280px;height:1px;background:#fbfbfb;"></div>
<div class="btn3d" style="left:4px;top:797px;width:14px;height:14px;background:#f0f0f0;border:1px solid;border-color:#fff #696969 #696969 #fff;box-shadow:inset -1px -1px 0 #a0a0a0;"></div>
<svg class="i" style="left:7px;top:800px" width="8" height="7" viewBox="0 0 8 7" ><path d="M1.300 1.300L6.700 5.700M6.700 1.300L1.300 5.700" stroke="#000" stroke-width="1.700"/></svg>
<div class="btn3d" style="left:4px;top:813px;width:14px;height:14px;background:#f0f0f0;border:1px solid;border-color:#fff #696969 #696969 #fff;box-shadow:inset -1px -1px 0 #a0a0a0;"></div>
<svg class="i" style="left:9px;top:817px" width="4" height="6" viewBox="0 0 4 6" ><path d="M0 0L3.200 2.800L0 5.600Z" fill="#a0a0a0"/></svg>
<div class="ssv-cap" style="left:2px;top:830px;width:18px;height:138px;background:linear-gradient(180deg,#dde7f1 0,#c6d5e6 60%,#bccde1 100%);"></div>
<span class="t" style="left:4px;top:964px;font-size:12px;line-height:13px;color:#444f62;transform-origin:0 0;transform:rotate(-90deg);letter-spacing:0.36px;">SpreadsheetView</span>
<div class="sheetframe" style="left:23px;top:800px;width:1252px;height:148px;border:1px solid;border-color:#fff #696969 #696969 #fff;border-right-width:2px;border-bottom-width:2px;"></div>
<div class="sheet" style="left:25px;top:802px;width:1246px;height:143px;background:#fff;border:1px solid #8a909a;"></div>
<div style="left:23px;top:945px;width:51px;height:3px;background:#f0f0f0;"></div>
<span class="t" style="left:49.5px;top:808px;font-size:12px;line-height:12px;color:#101010;letter-spacing:0.213px;">Multisim</span>
<span class="t" style="left:102px;top:808px;font-size:12px;line-height:12px;color:#101010;">-</span>
<span class="t" style="left:112.5px;top:808px;font-size:12px;line-height:12px;color:#101010;letter-spacing:-0.315px;">9 сентября 2015 г., 12:05:11</span>
<div class="tab" style="left:25px;top:945px;width:48px;height:23px;background:#f0f0f0;border:1px solid;border-color:transparent #696969 #696969 #fff;border-radius:0 0 3px 3px;box-shadow:inset -1px -1px 0 #a0a0a0;"></div>
<div style="left:26px;top:945px;width:46px;height:3px;background:#f0f0f0;"></div>
<span class="t" style="left:30px;top:954px;font-size:11px;line-height:11px;letter-spacing:-0.17px;">Results</span>
<div class="tab" style="left:73px;top:947px;width:41px;height:19px;background:#f0f0f0;border:1px solid;border-color:#a0a0a0 #696969 #696969 #fff;border-radius:0 0 3px 3px;box-shadow:inset -1px -1px 0 #a0a0a0;"></div>
<span class="t" style="left:77.5px;top:951px;font-size:11px;line-height:11px;letter-spacing:-0.281px;">Nets</span>
<div class="tab" style="left:115px;top:947px;width:70px;height:19px;background:#f0f0f0;border:1px solid;border-color:#a0a0a0 #696969 #696969 #fff;border-radius:0 0 3px 3px;box-shadow:inset -1px -1px 0 #a0a0a0;"></div>
<span class="t" style="left:119.7px;top:951px;font-size:11px;line-height:11px;letter-spacing:-0.308px;">Components</span>
<div class="tab" style="left:187px;top:947px;width:77px;height:19px;background:#f0f0f0;border:1px solid;border-color:#a0a0a0 #696969 #696969 #fff;border-radius:0 0 3px 3px;box-shadow:inset -1px -1px 0 #a0a0a0;"></div>
<span class="t" style="left:191.6px;top:951px;font-size:11px;line-height:11px;letter-spacing:-0.16px;">Copper layers</span>
<div class="tab" style="left:266px;top:947px;width:58px;height:19px;background:#f0f0f0;border:1px solid;border-color:#a0a0a0 #696969 #696969 #fff;border-radius:0 0 3px 3px;box-shadow:inset -1px -1px 0 #a0a0a0;"></div>
<span class="t" style="left:270.6px;top:951px;font-size:11px;line-height:11px;letter-spacing:-0.396px;">Simulation</span>
<div style="left:0px;top:973px;width:1280px;height:1px;background:#a0a0a0;"></div>
<div style="left:0px;top:974px;width:1280px;height:1px;background:#fff;"></div>
<div style="left:0px;top:975px;width:1280px;height:1px;background:#8c8c8c;"></div>
<div style="left:0px;top:976px;width:1280px;height:1px;background:#fff;"></div>
<div class="status" style="left:0px;top:977px;width:1280px;height:17px;background:#f1eded;border-left:1px solid #fff;"></div>
<span class="t" style="left:701px;top:981px;font-size:12px;line-height:12px;">-</span>
<div style="left:848px;top:977px;width:1px;height:17px;background:#d4d0d0;"></div>
<div style="left:849px;top:977px;width:1px;height:17px;background:#fff;"></div>
<span class="t" style="left:854px;top:980px;font-size:12px;line-height:12px;letter-spacing:-0.124px;">Design1: Simulating...</span>
<div style="left:1032px;top:977px;width:1px;height:17px;background:#d4d0d0;"></div>
<div style="left:1033px;top:977px;width:1px;height:17px;background:#fff;"></div>
<span class="t" style="left:1037.5px;top:980px;font-size:12px;line-height:12px;letter-spacing:-0.444px;">Tran: 1.599 s</span>
<div style="left:1215px;top:977px;width:1px;height:17px;background:#d4d0d0;"></div>
<div style="left:1216px;top:977px;width:1px;height:17px;background:#fff;"></div>
<div style="left:1220px;top:980px;width:6px;height:12px;background:#00ff00;border-left:1px solid #2e8b2e;border-top:1px solid #2e8b2e;box-shadow:1px 1px 0 #c8f8c8;"></div>
<div style="left:1228px;top:980px;width:6px;height:12px;background:#00ff00;border-left:1px solid #2e8b2e;border-top:1px solid #2e8b2e;box-shadow:1px 1px 0 #c8f8c8;"></div>
<div style="left:1236px;top:980px;width:6px;height:12px;background:#00ff00;border-left:1px solid #2e8b2e;border-top:1px solid #2e8b2e;box-shadow:1px 1px 0 #c8f8c8;"></div>
<div style="left:1244px;top:980px;width:6px;height:12px;background:#e2e2e2;border-left:1px solid #9a9a9a;border-top:1px solid #9a9a9a;box-shadow:1px 1px 0 #fbfbf0;"></div>
<div style="left:1252px;top:980px;width:6px;height:12px;background:#00ff00;border-left:1px solid #2e8b2e;border-top:1px solid #2e8b2e;box-shadow:1px 1px 0 #c8f8c8;"></div>
<div style="left:1260px;top:980px;width:6px;height:12px;background:#00ff00;border-left:1px solid #2e8b2e;border-top:1px solid #2e8b2e;box-shadow:1px 1px 0 #c8f8c8;"></div>
<div style="left:1268px;top:980px;width:6px;height:12px;background:#00ff00;border-left:1px solid #2e8b2e;border-top:1px solid #2e8b2e;box-shadow:1px 1px 0 #c8f8c8;"></div>
<div style="left:1279px;top:977px;width:1px;height:17px;background:#d4d0d0;"></div>
</div>
</body></html>
